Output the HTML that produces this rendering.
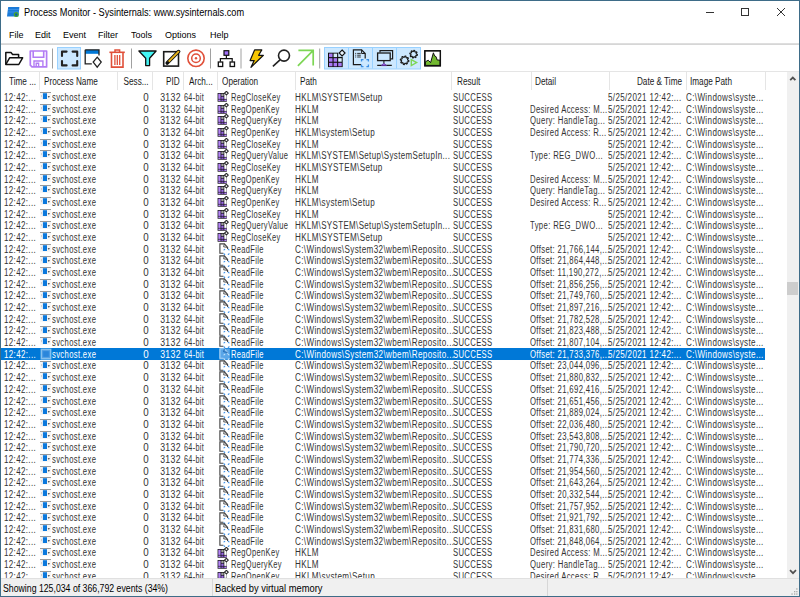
<!DOCTYPE html><html><head><meta charset="utf-8"><style>
*{margin:0;padding:0;box-sizing:border-box}
html,body{width:800px;height:597px;overflow:hidden;background:#fff}
body{position:relative;font-family:"Liberation Sans",sans-serif;color:#000}
.a{position:absolute}
.t{position:absolute;white-space:nowrap}
#rows .r{position:absolute;left:1px;width:764px;height:11.68px;font-size:10px;line-height:11.68px;color:#333}
#rows .r span{position:absolute;top:0.8px;white-space:nowrap;letter-spacing:0.45px;transform:scaleX(0.78);transform-origin:0 0}
#rows .r span.R{transform-origin:100% 0}
#rows .r.sel{background:#0078d7;color:#fff}
.hd{position:absolute;top:72px;height:18px;line-height:18px;font-size:10px;color:#222}
.hs{position:absolute;top:72px;width:1px;height:18px;background:#e5e5e5}
</style></head><body><div class="a" style="left:0;top:0;width:800px;height:597px;border:1px solid #3e6c88"></div>
<svg class="a" style="left:0;top:0" width="30" height="24">
<path d="M8.2 7 L19.4 7 L18.4 16.6 L7 16.6 Z" fill="#1a7ad8"/>
<path d="M8 9.5 L19.2 9.5 M7.8 12 L19 12" stroke="#4aa0f0" stroke-width="0.6"/>
<circle cx="16.2" cy="14.6" r="1.9" fill="#0a5fb0" stroke="#4aa828" stroke-width="1.2"/>
</svg>
<div class="t" style="left:23.50px;transform-origin:0 0;top:7.84px;font-size:10px;line-height:10px;transform:scaleX(0.9190);">Process Monitor - Sysinternals: www.sysinternals.com</div>
<div class="a" style="left:706px;top:12px;width:8px;height:1px;background:#333"></div>
<div class="a" style="left:741px;top:8px;width:8px;height:8px;border:1px solid #333"></div>
<svg class="a" style="left:775px;top:6px" width="12" height="12"><path d="M2 2 L10 10 M10 2 L2 10" stroke="#333" stroke-width="1"/></svg>
<div class="t" style="left:8.50px;transform-origin:0 0;top:30.34px;font-size:9.4px;line-height:9.4px;transform:scaleX(0.9600);">File</div>
<div class="t" style="left:35.00px;transform-origin:0 0;top:30.34px;font-size:9.4px;line-height:9.4px;transform:scaleX(0.9600);">Edit</div>
<div class="t" style="left:63.20px;transform-origin:0 0;top:30.34px;font-size:9.4px;line-height:9.4px;transform:scaleX(0.9600);">Event</div>
<div class="t" style="left:97.70px;transform-origin:0 0;top:30.34px;font-size:9.4px;line-height:9.4px;transform:scaleX(0.9600);">Filter</div>
<div class="t" style="left:131.10px;transform-origin:0 0;top:30.34px;font-size:9.4px;line-height:9.4px;transform:scaleX(0.9600);">Tools</div>
<div class="t" style="left:164.50px;transform-origin:0 0;top:30.34px;font-size:9.4px;line-height:9.4px;transform:scaleX(0.9600);">Options</div>
<div class="t" style="left:210.10px;transform-origin:0 0;top:30.34px;font-size:9.4px;line-height:9.4px;transform:scaleX(0.9600);">Help</div>
<div class="a" style="left:1px;top:43px;width:798px;height:1px;background:#dedede"></div>
<div class="a" style="left:1px;top:44px;width:798px;height:1px;background:#d6d6d6"></div>
<svg class="a" style="left:0;top:44px" width="800" height="27" viewBox="0 44 800 27">
<rect x="57.5" y="47.5" width="23" height="21.5" fill="#cce8ff" stroke="#99d1ff" stroke-width="1"/>
<rect x="324.5" y="47.5" width="96" height="21.5" fill="#cce8ff" stroke="#99d1ff" stroke-width="1"/>
<line x1="348.5" y1="48" x2="348.5" y2="68.5" stroke="#99d1ff" stroke-width="1"/>
<line x1="372.5" y1="48" x2="372.5" y2="68.5" stroke="#99d1ff" stroke-width="1"/>
<line x1="396.5" y1="48" x2="396.5" y2="68.5" stroke="#99d1ff" stroke-width="1"/>
<line x1="52.5" y1="48.5" x2="52.5" y2="68.5" stroke="#a0a0a0" stroke-width="1"/>
<line x1="131.5" y1="48.5" x2="131.5" y2="68.5" stroke="#a0a0a0" stroke-width="1"/>
<line x1="210.5" y1="48.5" x2="210.5" y2="68.5" stroke="#a0a0a0" stroke-width="1"/>
<line x1="241" y1="48.5" x2="241" y2="68.5" stroke="#a0a0a0" stroke-width="1"/>
<line x1="319.7" y1="48.5" x2="319.7" y2="68.5" stroke="#a0a0a0" stroke-width="1"/>
<path d="M5.8 64.5 L5.8 52.6 L11 52.6 L12.6 54.4 L18.6 54.4 L18.6 57.8" fill="none" stroke="#111" stroke-width="1.5" stroke-linejoin="round"/>
<path d="M5.8 64.5 L9.6 57.8 L22.6 57.8 L18.8 64.5 Z" fill="none" stroke="#111" stroke-width="1.5" stroke-linejoin="round"/>
<path d="M30.3 51 L46.6 51 L46.6 66.9 L32 66.9 L30.3 65.2 Z" fill="none" stroke="#b27cf4" stroke-width="1.7" stroke-linejoin="round"/>
<path d="M33.2 51 L33.2 57.3 L43.7 57.3 L43.7 51" fill="none" stroke="#b27cf4" stroke-width="1.6"/>
<path d="M34 66.9 L34 61 L42.9 61 L42.9 66.9 M36.2 66.9 L36.2 63.2 L38.6 63.2 L38.6 66.9" fill="none" stroke="#b27cf4" stroke-width="1.4"/>
<path d="M62 56 L62 51.6 L66.6 51.6 M72.6 51.6 L77.2 51.6 L77.2 56 M77.2 61 L77.2 65.4 L72.6 65.4 M66.6 65.4 L62 65.4 L62 61" fill="none" stroke="#222" stroke-width="2.1" stroke-linecap="round" stroke-linejoin="round"/>
<rect x="85.2" y="49.8" width="13.8" height="4" fill="#0078d7"/>
<path d="M85.2 49.8 L99 49.8 L99 55.6 M85.2 49.8 L85.2 63.8 L91.8 63.8" fill="none" stroke="#222" stroke-width="1.3"/>
<path d="M97.2 57.2 L101.2 62.1 L97.2 67.1 L93.2 62.1 Z" fill="none" stroke="#222" stroke-width="1.3"/>
<path d="M109.4 52.3 L124.8 52.3" stroke="#e0503a" stroke-width="1.6"/>
<path d="M115 52.3 L115 50 L119.6 50 L119.6 52.3" fill="none" stroke="#e0503a" stroke-width="1.5"/>
<path d="M111.5 52.3 L111.5 67.1 L123 67.1 L123 52.3" fill="none" stroke="#e0503a" stroke-width="1.6"/>
<path d="M114.9 55 L114.9 65 M117.3 55 L117.3 65 M119.7 55 L119.7 65" fill="none" stroke="#e0503a" stroke-width="1.3"/>
<path d="M138.9 51 L156.1 51 L149.6 58.2 L149.6 65.6 L145.7 65.6 L145.7 58.2 Z" fill="#44f4f4" stroke="#111" stroke-width="1.3" stroke-linejoin="round"/>
<rect x="163.7" y="51.7" width="14.8" height="14.4" fill="none" stroke="#1b1b1b" stroke-width="1.6"/>
<path d="M167.2 63 L178.6 51.6" stroke="#111" stroke-width="3.6" stroke-linecap="round"/>
<path d="M168.4 61.8 L178.5 51.7" stroke="#e8b41c" stroke-width="1.9" stroke-linecap="round"/>
<path d="M166.2 64.2 L167.8 60.8 L169.6 62.6 Z" fill="#111"/>
<circle cx="196" cy="58.3" r="8.2" fill="none" stroke="#e0503a" stroke-width="1.6"/>
<circle cx="196" cy="58.3" r="4.3" fill="none" stroke="#e0503a" stroke-width="1.5"/>
<circle cx="196" cy="58.3" r="1.2" fill="#e0503a"/>
<rect x="224" y="50.7" width="4.8" height="4.6" fill="#a070f8" stroke="#111" stroke-width="1.2"/>
<path d="M226.4 55.3 L226.4 58.6 M220.4 61.8 L220.4 58.6 L232.2 58.6 L232.2 61.8" fill="none" stroke="#111" stroke-width="1.2"/>
<rect x="218.3" y="62" width="4.4" height="4.5" fill="#fff" stroke="#111" stroke-width="1.3"/>
<rect x="230.1" y="62" width="4.4" height="4.5" fill="#fff" stroke="#111" stroke-width="1.3"/>
<path d="M254.6 49.9 L261.8 49.9 L258.6 55.3 L263.4 55.3 L251.0 67.3 L254.2 60.6 L250.1 60.6 Z" fill="#f7c600" stroke="#111" stroke-width="1.2" stroke-linejoin="round"/>
<circle cx="284" cy="55.6" r="5.5" fill="none" stroke="#222" stroke-width="1.6"/>
<path d="M280 59.8 L272.9 66.3" stroke="#222" stroke-width="1.6"/>
<path d="M297.9 65.9 L313 50.6 M298.4 50.4 L313.2 50.4 L313.2 65.6" fill="none" stroke="#7dd655" stroke-width="1.7"/>
<rect x="328" y="52.7" width="10.2" height="4.8" fill="#111"/>
<rect x="328" y="56.9" width="14.7" height="10.2" fill="#111"/>
<rect x="329.00" y="53.60" width="3.5" height="3.5" fill="#a878f4"/>
<rect x="333.60" y="53.60" width="3.5" height="3.5" fill="#d8eefa"/>
<rect x="329.00" y="58.20" width="3.5" height="3.5" fill="#a878f4"/>
<rect x="333.60" y="58.20" width="3.5" height="3.5" fill="#a878f4"/>
<rect x="338.20" y="58.20" width="3.5" height="3.5" fill="#d8eefa"/>
<rect x="329.00" y="62.80" width="3.5" height="3.5" fill="#a878f4"/>
<rect x="333.60" y="62.80" width="3.5" height="3.5" fill="#a878f4"/>
<rect x="338.20" y="62.80" width="3.5" height="3.5" fill="#a878f4"/>
<path d="M342.1 50 L345.1 53 L342.1 56 L339.1 53 Z" fill="#e8f4fc" stroke="#111" stroke-width="1.1"/>
<path d="M361 64.6 L353.4 64.6 L353.4 49.9 L361.6 49.9 L365.2 53.5 L365.2 58.5" fill="none" stroke="#1b1b1b" stroke-width="1.2"/>
<path d="M361.6 49.9 L361.6 53.5 L365.2 53.5" fill="none" stroke="#1b1b1b" stroke-width="1"/>
<path d="M355.2 53.4 h1 M357.2 53.4 h3.6 M355.2 55.2 h1 M357.2 55.2 h3.6 M355.2 57 h1 M357.2 57 h3.6" stroke="#333" stroke-width="1"/>
<path d="M361.5 61.6 L361.5 59.6 L363.5 59.6 M366.4 59.6 L368.4 59.6 L368.4 61.6 M368.4 64.6 L368.4 66.7 L366.4 66.7 M363.5 66.7 L361.5 66.7 L361.5 64.6" fill="none" stroke="#3c90e6" stroke-width="1.3"/>
<path d="M380 52.4 L380 50.7 L392.6 50.7 L392.6 58.8 L390.4 58.8" fill="none" stroke="#1b1b1b" stroke-width="1.2"/>
<rect x="377.6" y="53" width="12.6" height="7.6" fill="#cce8ff" stroke="#1b1b1b" stroke-width="1.3"/>
<path d="M383.9 60.6 L383.9 63.4 M377.2 65.4 L391.8 65.4" stroke="#1b1b1b" stroke-width="1.1"/>
<path d="M381.2 65.6 L383.9 63.2 L386.6 65.6 Z" fill="#9a5ee0" stroke="#5a2aa0" stroke-width="0.7"/>
<path d="M408.88,60.72 L408.71,61.55 L407.33,61.76 L407.00,62.27 L407.33,63.62 L406.63,64.09 L405.50,63.27 L404.90,63.39 L404.18,64.58 L403.35,64.41 L403.14,63.03 L402.63,62.70 L401.28,63.03 L400.81,62.33 L401.63,61.20 L401.51,60.60 L400.32,59.88 L400.49,59.05 L401.87,58.84 L402.20,58.33 L401.87,56.98 L402.57,56.51 L403.70,57.33 L404.30,57.21 L405.02,56.02 L405.85,56.19 L406.06,57.57 L406.57,57.90 L407.92,57.57 L408.39,58.27 L407.57,59.40 L407.69,60.00Z" fill="none" stroke="#1b1b1b" stroke-width="1.2" stroke-linejoin="round"/>
<path d="M417.38,54.57 L417.24,55.30 L415.98,55.47 L415.69,55.91 L416.01,57.14 L415.39,57.55 L414.38,56.78 L413.86,56.89 L413.23,57.98 L412.50,57.84 L412.33,56.58 L411.89,56.29 L410.66,56.61 L410.25,55.99 L411.02,54.98 L410.91,54.46 L409.82,53.83 L409.96,53.10 L411.22,52.93 L411.51,52.49 L411.19,51.26 L411.81,50.85 L412.82,51.62 L413.34,51.51 L413.97,50.42 L414.70,50.56 L414.87,51.82 L415.31,52.11 L416.54,51.79 L416.95,52.41 L416.18,53.42 L416.29,53.94Z" fill="none" stroke="#1b1b1b" stroke-width="1.2" stroke-linejoin="round"/>
<path d="M411.3 59.6 L416.6 62.6 L411.3 65.6 Z" fill="none" stroke="#7dd655" stroke-width="1.4"/>
<rect x="424.8" y="50.8" width="15.6" height="15" fill="#fff" stroke="#111" stroke-width="1.25"/>
<path d="M425.4 61.8 L428.2 60.2 L430.6 62.6 L433.4 52.8 L434.6 56 L436 56.6 L437.2 60 L440 60.2 L440 65.4 L425.4 65.4 Z" fill="#72b830" stroke="#111" stroke-width="1" stroke-linejoin="round"/>
<rect x="424.8" y="50.8" width="15.6" height="15" fill="none" stroke="#111" stroke-width="1.25"/>
</svg>
<div class="a" style="left:1px;top:71px;width:798px;height:1px;background:#e5e5e5"></div>
<div class="hs" style="left:38.5px"></div>
<div class="hs" style="left:116.5px"></div>
<div class="hs" style="left:152.0px"></div>
<div class="hs" style="left:182.5px"></div>
<div class="hs" style="left:217.1px"></div>
<div class="hs" style="left:295.0px"></div>
<div class="hs" style="left:451.2px"></div>
<div class="hs" style="left:530.7px"></div>
<div class="hs" style="left:608.5px"></div>
<div class="hs" style="left:685.8px"></div>
<div class="hs" style="left:764.5px"></div>
<div class="t" style="left:8.70px;transform-origin:0 0;top:76.73px;font-size:10px;line-height:10px;transform:scaleX(0.8200);color:#1a1a1a;">Time ...</div>
<div class="t" style="left:43.90px;transform-origin:0 0;top:76.73px;font-size:10px;line-height:10px;transform:scaleX(0.8200);color:#1a1a1a;">Process Name</div>
<div class="t" style="right:651.50px;transform-origin:100% 0;top:76.73px;font-size:10px;line-height:10px;transform:scaleX(0.8200);color:#1a1a1a;">Sess...</div>
<div class="t" style="right:620.00px;transform-origin:100% 0;top:76.73px;font-size:10px;line-height:10px;transform:scaleX(0.8200);color:#1a1a1a;">PID</div>
<div class="t" style="left:189.30px;transform-origin:0 0;top:76.73px;font-size:10px;line-height:10px;transform:scaleX(0.8200);color:#1a1a1a;">Arch...</div>
<div class="t" style="left:222.30px;transform-origin:0 0;top:76.73px;font-size:10px;line-height:10px;transform:scaleX(0.8200);color:#1a1a1a;">Operation</div>
<div class="t" style="left:300.10px;transform-origin:0 0;top:76.73px;font-size:10px;line-height:10px;transform:scaleX(0.8200);color:#1a1a1a;">Path</div>
<div class="t" style="left:456.90px;transform-origin:0 0;top:76.73px;font-size:10px;line-height:10px;transform:scaleX(0.8200);color:#1a1a1a;">Result</div>
<div class="t" style="left:535.00px;transform-origin:0 0;top:76.73px;font-size:10px;line-height:10px;transform:scaleX(0.8200);color:#1a1a1a;">Detail</div>
<div class="t" style="right:118.00px;transform-origin:100% 0;top:76.73px;font-size:10px;line-height:10px;transform:scaleX(0.8200);color:#1a1a1a;">Date &amp; Time</div>
<div class="t" style="left:690.30px;transform-origin:0 0;top:76.73px;font-size:10px;line-height:10px;transform:scaleX(0.8200);color:#1a1a1a;">Image Path</div>
<div id="rows">
<div class="r" style="top:91.04px"><span style="left:2.95px;transform:scaleX(0.7977)">12:42:...</span><svg class="a" style="left:38px;top:0" width="12" height="12"><rect x="1" y="1" width="11" height="1" fill="#9a9a9a"/><rect x="1" y="2" width="11" height="7" fill="#f6f6f6"/><rect x="2.2" y="4" width="0.8" height="2.2" fill="#c8c8c8"/><rect x="3.9" y="2.2" width="4.1" height="5.8" fill="#0a78dc"/><path d="M8.7 5 L10.9 5 L9.8 6.9 Z" fill="#555"/></svg><span style="left:51.20px;transform:scaleX(0.7661)">svchost.exe</span><span class="R" style="right:616.00px;transform:scaleX(0.9750)">0</span><span class="R" style="right:583.80px;transform:scaleX(0.8694)">3132</span><span style="left:183.30px;transform:scaleX(0.7261)">64-bit</span><svg class="a" style="left:216.4px;top:0" width="13" height="12"><rect x="0.6" y="2" width="9.2" height="8.7" fill="#111"/><rect x="1.3" y="2.7" width="2.3" height="5.2" fill="#b484f8"/><rect x="1.3" y="8.5" width="2.3" height="1.6" fill="#b484f8"/><rect x="4.3" y="2.7" width="2.3" height="2.3" fill="#a0a0a0"/><rect x="4.3" y="5.6" width="2.3" height="2.3" fill="#9a6ae4"/><rect x="4.3" y="8.5" width="2.3" height="1.6" fill="#7e50c0"/><rect x="7.3" y="2.7" width="2.3" height="5.2" fill="#fff"/><rect x="7.3" y="8.5" width="2.3" height="1.6" fill="#b484f8"/><path d="M9.4 0.3 L11.3 2.1 L9.4 3.9 L7.5 2.1 Z" fill="#fff" stroke="#2a2a2a" stroke-width="1.1" stroke-linejoin="round"/></svg><span style="left:229.70px;transform:scaleX(0.7514)">RegCloseKey</span><span style="left:294.20px;transform:scaleX(0.8099)">HKLM\SYSTEM\Setup</span><span style="left:451.80px;transform:scaleX(0.7678)">SUCCESS</span><span style="left:528.50px;transform:scaleX(0.7730)"></span><span style="left:607.30px;transform:scaleX(0.7995)">5/25/2021 12:42:...</span><span style="left:685.00px;transform:scaleX(0.8066)">C:\Windows\syste...</span></div>
<div class="r" style="top:102.72px"><span style="left:2.95px;transform:scaleX(0.7977)">12:42:...</span><svg class="a" style="left:38px;top:0" width="12" height="12"><rect x="1" y="1" width="11" height="1" fill="#9a9a9a"/><rect x="1" y="2" width="11" height="7" fill="#f6f6f6"/><rect x="2.2" y="4" width="0.8" height="2.2" fill="#c8c8c8"/><rect x="3.9" y="2.2" width="4.1" height="5.8" fill="#0a78dc"/><path d="M8.7 5 L10.9 5 L9.8 6.9 Z" fill="#555"/></svg><span style="left:51.20px;transform:scaleX(0.7661)">svchost.exe</span><span class="R" style="right:616.00px;transform:scaleX(0.9750)">0</span><span class="R" style="right:583.80px;transform:scaleX(0.8694)">3132</span><span style="left:183.30px;transform:scaleX(0.7261)">64-bit</span><svg class="a" style="left:216.4px;top:0" width="13" height="12"><rect x="0.6" y="2" width="9.2" height="8.7" fill="#111"/><rect x="1.3" y="2.7" width="2.3" height="5.2" fill="#b484f8"/><rect x="1.3" y="8.5" width="2.3" height="1.6" fill="#b484f8"/><rect x="4.3" y="2.7" width="2.3" height="2.3" fill="#a0a0a0"/><rect x="4.3" y="5.6" width="2.3" height="2.3" fill="#9a6ae4"/><rect x="4.3" y="8.5" width="2.3" height="1.6" fill="#7e50c0"/><rect x="7.3" y="2.7" width="2.3" height="5.2" fill="#fff"/><rect x="7.3" y="8.5" width="2.3" height="1.6" fill="#b484f8"/><path d="M9.4 0.3 L11.3 2.1 L9.4 3.9 L7.5 2.1 Z" fill="#fff" stroke="#2a2a2a" stroke-width="1.1" stroke-linejoin="round"/></svg><span style="left:229.70px;transform:scaleX(0.7514)">RegOpenKey</span><span style="left:294.20px;transform:scaleX(0.8099)">HKLM</span><span style="left:451.80px;transform:scaleX(0.7678)">SUCCESS</span><span style="left:528.50px;transform:scaleX(0.7730)">Desired Access: M...</span><span style="left:607.30px;transform:scaleX(0.7995)">5/25/2021 12:42:...</span><span style="left:685.00px;transform:scaleX(0.8066)">C:\Windows\syste...</span></div>
<div class="r" style="top:114.40px"><span style="left:2.95px;transform:scaleX(0.7977)">12:42:...</span><svg class="a" style="left:38px;top:0" width="12" height="12"><rect x="1" y="1" width="11" height="1" fill="#9a9a9a"/><rect x="1" y="2" width="11" height="7" fill="#f6f6f6"/><rect x="2.2" y="4" width="0.8" height="2.2" fill="#c8c8c8"/><rect x="3.9" y="2.2" width="4.1" height="5.8" fill="#0a78dc"/><path d="M8.7 5 L10.9 5 L9.8 6.9 Z" fill="#555"/></svg><span style="left:51.20px;transform:scaleX(0.7661)">svchost.exe</span><span class="R" style="right:616.00px;transform:scaleX(0.9750)">0</span><span class="R" style="right:583.80px;transform:scaleX(0.8694)">3132</span><span style="left:183.30px;transform:scaleX(0.7261)">64-bit</span><svg class="a" style="left:216.4px;top:0" width="13" height="12"><rect x="0.6" y="2" width="9.2" height="8.7" fill="#111"/><rect x="1.3" y="2.7" width="2.3" height="5.2" fill="#b484f8"/><rect x="1.3" y="8.5" width="2.3" height="1.6" fill="#b484f8"/><rect x="4.3" y="2.7" width="2.3" height="2.3" fill="#a0a0a0"/><rect x="4.3" y="5.6" width="2.3" height="2.3" fill="#9a6ae4"/><rect x="4.3" y="8.5" width="2.3" height="1.6" fill="#7e50c0"/><rect x="7.3" y="2.7" width="2.3" height="5.2" fill="#fff"/><rect x="7.3" y="8.5" width="2.3" height="1.6" fill="#b484f8"/><path d="M9.4 0.3 L11.3 2.1 L9.4 3.9 L7.5 2.1 Z" fill="#fff" stroke="#2a2a2a" stroke-width="1.1" stroke-linejoin="round"/></svg><span style="left:229.70px;transform:scaleX(0.7514)">RegQueryKey</span><span style="left:294.20px;transform:scaleX(0.8099)">HKLM</span><span style="left:451.80px;transform:scaleX(0.7678)">SUCCESS</span><span style="left:528.50px;transform:scaleX(0.7730)">Query: HandleTag...</span><span style="left:607.30px;transform:scaleX(0.7995)">5/25/2021 12:42:...</span><span style="left:685.00px;transform:scaleX(0.8066)">C:\Windows\syste...</span></div>
<div class="r" style="top:126.08px"><span style="left:2.95px;transform:scaleX(0.7977)">12:42:...</span><svg class="a" style="left:38px;top:0" width="12" height="12"><rect x="1" y="1" width="11" height="1" fill="#9a9a9a"/><rect x="1" y="2" width="11" height="7" fill="#f6f6f6"/><rect x="2.2" y="4" width="0.8" height="2.2" fill="#c8c8c8"/><rect x="3.9" y="2.2" width="4.1" height="5.8" fill="#0a78dc"/><path d="M8.7 5 L10.9 5 L9.8 6.9 Z" fill="#555"/></svg><span style="left:51.20px;transform:scaleX(0.7661)">svchost.exe</span><span class="R" style="right:616.00px;transform:scaleX(0.9750)">0</span><span class="R" style="right:583.80px;transform:scaleX(0.8694)">3132</span><span style="left:183.30px;transform:scaleX(0.7261)">64-bit</span><svg class="a" style="left:216.4px;top:0" width="13" height="12"><rect x="0.6" y="2" width="9.2" height="8.7" fill="#111"/><rect x="1.3" y="2.7" width="2.3" height="5.2" fill="#b484f8"/><rect x="1.3" y="8.5" width="2.3" height="1.6" fill="#b484f8"/><rect x="4.3" y="2.7" width="2.3" height="2.3" fill="#a0a0a0"/><rect x="4.3" y="5.6" width="2.3" height="2.3" fill="#9a6ae4"/><rect x="4.3" y="8.5" width="2.3" height="1.6" fill="#7e50c0"/><rect x="7.3" y="2.7" width="2.3" height="5.2" fill="#fff"/><rect x="7.3" y="8.5" width="2.3" height="1.6" fill="#b484f8"/><path d="M9.4 0.3 L11.3 2.1 L9.4 3.9 L7.5 2.1 Z" fill="#fff" stroke="#2a2a2a" stroke-width="1.1" stroke-linejoin="round"/></svg><span style="left:229.70px;transform:scaleX(0.7514)">RegOpenKey</span><span style="left:294.20px;transform:scaleX(0.8099)">HKLM\system\Setup</span><span style="left:451.80px;transform:scaleX(0.7678)">SUCCESS</span><span style="left:528.50px;transform:scaleX(0.7730)">Desired Access: R...</span><span style="left:607.30px;transform:scaleX(0.7995)">5/25/2021 12:42:...</span><span style="left:685.00px;transform:scaleX(0.8066)">C:\Windows\syste...</span></div>
<div class="r" style="top:137.76px"><span style="left:2.95px;transform:scaleX(0.7977)">12:42:...</span><svg class="a" style="left:38px;top:0" width="12" height="12"><rect x="1" y="1" width="11" height="1" fill="#9a9a9a"/><rect x="1" y="2" width="11" height="7" fill="#f6f6f6"/><rect x="2.2" y="4" width="0.8" height="2.2" fill="#c8c8c8"/><rect x="3.9" y="2.2" width="4.1" height="5.8" fill="#0a78dc"/><path d="M8.7 5 L10.9 5 L9.8 6.9 Z" fill="#555"/></svg><span style="left:51.20px;transform:scaleX(0.7661)">svchost.exe</span><span class="R" style="right:616.00px;transform:scaleX(0.9750)">0</span><span class="R" style="right:583.80px;transform:scaleX(0.8694)">3132</span><span style="left:183.30px;transform:scaleX(0.7261)">64-bit</span><svg class="a" style="left:216.4px;top:0" width="13" height="12"><rect x="0.6" y="2" width="9.2" height="8.7" fill="#111"/><rect x="1.3" y="2.7" width="2.3" height="5.2" fill="#b484f8"/><rect x="1.3" y="8.5" width="2.3" height="1.6" fill="#b484f8"/><rect x="4.3" y="2.7" width="2.3" height="2.3" fill="#a0a0a0"/><rect x="4.3" y="5.6" width="2.3" height="2.3" fill="#9a6ae4"/><rect x="4.3" y="8.5" width="2.3" height="1.6" fill="#7e50c0"/><rect x="7.3" y="2.7" width="2.3" height="5.2" fill="#fff"/><rect x="7.3" y="8.5" width="2.3" height="1.6" fill="#b484f8"/><path d="M9.4 0.3 L11.3 2.1 L9.4 3.9 L7.5 2.1 Z" fill="#fff" stroke="#2a2a2a" stroke-width="1.1" stroke-linejoin="round"/></svg><span style="left:229.70px;transform:scaleX(0.7514)">RegCloseKey</span><span style="left:294.20px;transform:scaleX(0.8099)">HKLM</span><span style="left:451.80px;transform:scaleX(0.7678)">SUCCESS</span><span style="left:528.50px;transform:scaleX(0.7730)"></span><span style="left:607.30px;transform:scaleX(0.7995)">5/25/2021 12:42:...</span><span style="left:685.00px;transform:scaleX(0.8066)">C:\Windows\syste...</span></div>
<div class="r" style="top:149.44px"><span style="left:2.95px;transform:scaleX(0.7977)">12:42:...</span><svg class="a" style="left:38px;top:0" width="12" height="12"><rect x="1" y="1" width="11" height="1" fill="#9a9a9a"/><rect x="1" y="2" width="11" height="7" fill="#f6f6f6"/><rect x="2.2" y="4" width="0.8" height="2.2" fill="#c8c8c8"/><rect x="3.9" y="2.2" width="4.1" height="5.8" fill="#0a78dc"/><path d="M8.7 5 L10.9 5 L9.8 6.9 Z" fill="#555"/></svg><span style="left:51.20px;transform:scaleX(0.7661)">svchost.exe</span><span class="R" style="right:616.00px;transform:scaleX(0.9750)">0</span><span class="R" style="right:583.80px;transform:scaleX(0.8694)">3132</span><span style="left:183.30px;transform:scaleX(0.7261)">64-bit</span><svg class="a" style="left:216.4px;top:0" width="13" height="12"><rect x="0.6" y="2" width="9.2" height="8.7" fill="#111"/><rect x="1.3" y="2.7" width="2.3" height="5.2" fill="#b484f8"/><rect x="1.3" y="8.5" width="2.3" height="1.6" fill="#b484f8"/><rect x="4.3" y="2.7" width="2.3" height="2.3" fill="#a0a0a0"/><rect x="4.3" y="5.6" width="2.3" height="2.3" fill="#9a6ae4"/><rect x="4.3" y="8.5" width="2.3" height="1.6" fill="#7e50c0"/><rect x="7.3" y="2.7" width="2.3" height="5.2" fill="#fff"/><rect x="7.3" y="8.5" width="2.3" height="1.6" fill="#b484f8"/><path d="M9.4 0.3 L11.3 2.1 L9.4 3.9 L7.5 2.1 Z" fill="#fff" stroke="#2a2a2a" stroke-width="1.1" stroke-linejoin="round"/></svg><span style="left:229.70px;transform:scaleX(0.7514)">RegQueryValue</span><span style="left:294.20px;transform:scaleX(0.7969)">HKLM\SYSTEM\Setup\SystemSetupIn...</span><span style="left:451.80px;transform:scaleX(0.7678)">SUCCESS</span><span style="left:528.50px;transform:scaleX(0.7730)">Type: REG_DWO...</span><span style="left:607.30px;transform:scaleX(0.7995)">5/25/2021 12:42:...</span><span style="left:685.00px;transform:scaleX(0.8066)">C:\Windows\syste...</span></div>
<div class="r" style="top:161.12px"><span style="left:2.95px;transform:scaleX(0.7977)">12:42:...</span><svg class="a" style="left:38px;top:0" width="12" height="12"><rect x="1" y="1" width="11" height="1" fill="#9a9a9a"/><rect x="1" y="2" width="11" height="7" fill="#f6f6f6"/><rect x="2.2" y="4" width="0.8" height="2.2" fill="#c8c8c8"/><rect x="3.9" y="2.2" width="4.1" height="5.8" fill="#0a78dc"/><path d="M8.7 5 L10.9 5 L9.8 6.9 Z" fill="#555"/></svg><span style="left:51.20px;transform:scaleX(0.7661)">svchost.exe</span><span class="R" style="right:616.00px;transform:scaleX(0.9750)">0</span><span class="R" style="right:583.80px;transform:scaleX(0.8694)">3132</span><span style="left:183.30px;transform:scaleX(0.7261)">64-bit</span><svg class="a" style="left:216.4px;top:0" width="13" height="12"><rect x="0.6" y="2" width="9.2" height="8.7" fill="#111"/><rect x="1.3" y="2.7" width="2.3" height="5.2" fill="#b484f8"/><rect x="1.3" y="8.5" width="2.3" height="1.6" fill="#b484f8"/><rect x="4.3" y="2.7" width="2.3" height="2.3" fill="#a0a0a0"/><rect x="4.3" y="5.6" width="2.3" height="2.3" fill="#9a6ae4"/><rect x="4.3" y="8.5" width="2.3" height="1.6" fill="#7e50c0"/><rect x="7.3" y="2.7" width="2.3" height="5.2" fill="#fff"/><rect x="7.3" y="8.5" width="2.3" height="1.6" fill="#b484f8"/><path d="M9.4 0.3 L11.3 2.1 L9.4 3.9 L7.5 2.1 Z" fill="#fff" stroke="#2a2a2a" stroke-width="1.1" stroke-linejoin="round"/></svg><span style="left:229.70px;transform:scaleX(0.7514)">RegCloseKey</span><span style="left:294.20px;transform:scaleX(0.8099)">HKLM\SYSTEM\Setup</span><span style="left:451.80px;transform:scaleX(0.7678)">SUCCESS</span><span style="left:528.50px;transform:scaleX(0.7730)"></span><span style="left:607.30px;transform:scaleX(0.7995)">5/25/2021 12:42:...</span><span style="left:685.00px;transform:scaleX(0.8066)">C:\Windows\syste...</span></div>
<div class="r" style="top:172.80px"><span style="left:2.95px;transform:scaleX(0.7977)">12:42:...</span><svg class="a" style="left:38px;top:0" width="12" height="12"><rect x="1" y="1" width="11" height="1" fill="#9a9a9a"/><rect x="1" y="2" width="11" height="7" fill="#f6f6f6"/><rect x="2.2" y="4" width="0.8" height="2.2" fill="#c8c8c8"/><rect x="3.9" y="2.2" width="4.1" height="5.8" fill="#0a78dc"/><path d="M8.7 5 L10.9 5 L9.8 6.9 Z" fill="#555"/></svg><span style="left:51.20px;transform:scaleX(0.7661)">svchost.exe</span><span class="R" style="right:616.00px;transform:scaleX(0.9750)">0</span><span class="R" style="right:583.80px;transform:scaleX(0.8694)">3132</span><span style="left:183.30px;transform:scaleX(0.7261)">64-bit</span><svg class="a" style="left:216.4px;top:0" width="13" height="12"><rect x="0.6" y="2" width="9.2" height="8.7" fill="#111"/><rect x="1.3" y="2.7" width="2.3" height="5.2" fill="#b484f8"/><rect x="1.3" y="8.5" width="2.3" height="1.6" fill="#b484f8"/><rect x="4.3" y="2.7" width="2.3" height="2.3" fill="#a0a0a0"/><rect x="4.3" y="5.6" width="2.3" height="2.3" fill="#9a6ae4"/><rect x="4.3" y="8.5" width="2.3" height="1.6" fill="#7e50c0"/><rect x="7.3" y="2.7" width="2.3" height="5.2" fill="#fff"/><rect x="7.3" y="8.5" width="2.3" height="1.6" fill="#b484f8"/><path d="M9.4 0.3 L11.3 2.1 L9.4 3.9 L7.5 2.1 Z" fill="#fff" stroke="#2a2a2a" stroke-width="1.1" stroke-linejoin="round"/></svg><span style="left:229.70px;transform:scaleX(0.7514)">RegOpenKey</span><span style="left:294.20px;transform:scaleX(0.8099)">HKLM</span><span style="left:451.80px;transform:scaleX(0.7678)">SUCCESS</span><span style="left:528.50px;transform:scaleX(0.7730)">Desired Access: M...</span><span style="left:607.30px;transform:scaleX(0.7995)">5/25/2021 12:42:...</span><span style="left:685.00px;transform:scaleX(0.8066)">C:\Windows\syste...</span></div>
<div class="r" style="top:184.48px"><span style="left:2.95px;transform:scaleX(0.7977)">12:42:...</span><svg class="a" style="left:38px;top:0" width="12" height="12"><rect x="1" y="1" width="11" height="1" fill="#9a9a9a"/><rect x="1" y="2" width="11" height="7" fill="#f6f6f6"/><rect x="2.2" y="4" width="0.8" height="2.2" fill="#c8c8c8"/><rect x="3.9" y="2.2" width="4.1" height="5.8" fill="#0a78dc"/><path d="M8.7 5 L10.9 5 L9.8 6.9 Z" fill="#555"/></svg><span style="left:51.20px;transform:scaleX(0.7661)">svchost.exe</span><span class="R" style="right:616.00px;transform:scaleX(0.9750)">0</span><span class="R" style="right:583.80px;transform:scaleX(0.8694)">3132</span><span style="left:183.30px;transform:scaleX(0.7261)">64-bit</span><svg class="a" style="left:216.4px;top:0" width="13" height="12"><rect x="0.6" y="2" width="9.2" height="8.7" fill="#111"/><rect x="1.3" y="2.7" width="2.3" height="5.2" fill="#b484f8"/><rect x="1.3" y="8.5" width="2.3" height="1.6" fill="#b484f8"/><rect x="4.3" y="2.7" width="2.3" height="2.3" fill="#a0a0a0"/><rect x="4.3" y="5.6" width="2.3" height="2.3" fill="#9a6ae4"/><rect x="4.3" y="8.5" width="2.3" height="1.6" fill="#7e50c0"/><rect x="7.3" y="2.7" width="2.3" height="5.2" fill="#fff"/><rect x="7.3" y="8.5" width="2.3" height="1.6" fill="#b484f8"/><path d="M9.4 0.3 L11.3 2.1 L9.4 3.9 L7.5 2.1 Z" fill="#fff" stroke="#2a2a2a" stroke-width="1.1" stroke-linejoin="round"/></svg><span style="left:229.70px;transform:scaleX(0.7514)">RegQueryKey</span><span style="left:294.20px;transform:scaleX(0.8099)">HKLM</span><span style="left:451.80px;transform:scaleX(0.7678)">SUCCESS</span><span style="left:528.50px;transform:scaleX(0.7730)">Query: HandleTag...</span><span style="left:607.30px;transform:scaleX(0.7995)">5/25/2021 12:42:...</span><span style="left:685.00px;transform:scaleX(0.8066)">C:\Windows\syste...</span></div>
<div class="r" style="top:196.16px"><span style="left:2.95px;transform:scaleX(0.7977)">12:42:...</span><svg class="a" style="left:38px;top:0" width="12" height="12"><rect x="1" y="1" width="11" height="1" fill="#9a9a9a"/><rect x="1" y="2" width="11" height="7" fill="#f6f6f6"/><rect x="2.2" y="4" width="0.8" height="2.2" fill="#c8c8c8"/><rect x="3.9" y="2.2" width="4.1" height="5.8" fill="#0a78dc"/><path d="M8.7 5 L10.9 5 L9.8 6.9 Z" fill="#555"/></svg><span style="left:51.20px;transform:scaleX(0.7661)">svchost.exe</span><span class="R" style="right:616.00px;transform:scaleX(0.9750)">0</span><span class="R" style="right:583.80px;transform:scaleX(0.8694)">3132</span><span style="left:183.30px;transform:scaleX(0.7261)">64-bit</span><svg class="a" style="left:216.4px;top:0" width="13" height="12"><rect x="0.6" y="2" width="9.2" height="8.7" fill="#111"/><rect x="1.3" y="2.7" width="2.3" height="5.2" fill="#b484f8"/><rect x="1.3" y="8.5" width="2.3" height="1.6" fill="#b484f8"/><rect x="4.3" y="2.7" width="2.3" height="2.3" fill="#a0a0a0"/><rect x="4.3" y="5.6" width="2.3" height="2.3" fill="#9a6ae4"/><rect x="4.3" y="8.5" width="2.3" height="1.6" fill="#7e50c0"/><rect x="7.3" y="2.7" width="2.3" height="5.2" fill="#fff"/><rect x="7.3" y="8.5" width="2.3" height="1.6" fill="#b484f8"/><path d="M9.4 0.3 L11.3 2.1 L9.4 3.9 L7.5 2.1 Z" fill="#fff" stroke="#2a2a2a" stroke-width="1.1" stroke-linejoin="round"/></svg><span style="left:229.70px;transform:scaleX(0.7514)">RegOpenKey</span><span style="left:294.20px;transform:scaleX(0.8099)">HKLM\system\Setup</span><span style="left:451.80px;transform:scaleX(0.7678)">SUCCESS</span><span style="left:528.50px;transform:scaleX(0.7730)">Desired Access: R...</span><span style="left:607.30px;transform:scaleX(0.7995)">5/25/2021 12:42:...</span><span style="left:685.00px;transform:scaleX(0.8066)">C:\Windows\syste...</span></div>
<div class="r" style="top:207.84px"><span style="left:2.95px;transform:scaleX(0.7977)">12:42:...</span><svg class="a" style="left:38px;top:0" width="12" height="12"><rect x="1" y="1" width="11" height="1" fill="#9a9a9a"/><rect x="1" y="2" width="11" height="7" fill="#f6f6f6"/><rect x="2.2" y="4" width="0.8" height="2.2" fill="#c8c8c8"/><rect x="3.9" y="2.2" width="4.1" height="5.8" fill="#0a78dc"/><path d="M8.7 5 L10.9 5 L9.8 6.9 Z" fill="#555"/></svg><span style="left:51.20px;transform:scaleX(0.7661)">svchost.exe</span><span class="R" style="right:616.00px;transform:scaleX(0.9750)">0</span><span class="R" style="right:583.80px;transform:scaleX(0.8694)">3132</span><span style="left:183.30px;transform:scaleX(0.7261)">64-bit</span><svg class="a" style="left:216.4px;top:0" width="13" height="12"><rect x="0.6" y="2" width="9.2" height="8.7" fill="#111"/><rect x="1.3" y="2.7" width="2.3" height="5.2" fill="#b484f8"/><rect x="1.3" y="8.5" width="2.3" height="1.6" fill="#b484f8"/><rect x="4.3" y="2.7" width="2.3" height="2.3" fill="#a0a0a0"/><rect x="4.3" y="5.6" width="2.3" height="2.3" fill="#9a6ae4"/><rect x="4.3" y="8.5" width="2.3" height="1.6" fill="#7e50c0"/><rect x="7.3" y="2.7" width="2.3" height="5.2" fill="#fff"/><rect x="7.3" y="8.5" width="2.3" height="1.6" fill="#b484f8"/><path d="M9.4 0.3 L11.3 2.1 L9.4 3.9 L7.5 2.1 Z" fill="#fff" stroke="#2a2a2a" stroke-width="1.1" stroke-linejoin="round"/></svg><span style="left:229.70px;transform:scaleX(0.7514)">RegCloseKey</span><span style="left:294.20px;transform:scaleX(0.8099)">HKLM</span><span style="left:451.80px;transform:scaleX(0.7678)">SUCCESS</span><span style="left:528.50px;transform:scaleX(0.7730)"></span><span style="left:607.30px;transform:scaleX(0.7995)">5/25/2021 12:42:...</span><span style="left:685.00px;transform:scaleX(0.8066)">C:\Windows\syste...</span></div>
<div class="r" style="top:219.52px"><span style="left:2.95px;transform:scaleX(0.7977)">12:42:...</span><svg class="a" style="left:38px;top:0" width="12" height="12"><rect x="1" y="1" width="11" height="1" fill="#9a9a9a"/><rect x="1" y="2" width="11" height="7" fill="#f6f6f6"/><rect x="2.2" y="4" width="0.8" height="2.2" fill="#c8c8c8"/><rect x="3.9" y="2.2" width="4.1" height="5.8" fill="#0a78dc"/><path d="M8.7 5 L10.9 5 L9.8 6.9 Z" fill="#555"/></svg><span style="left:51.20px;transform:scaleX(0.7661)">svchost.exe</span><span class="R" style="right:616.00px;transform:scaleX(0.9750)">0</span><span class="R" style="right:583.80px;transform:scaleX(0.8694)">3132</span><span style="left:183.30px;transform:scaleX(0.7261)">64-bit</span><svg class="a" style="left:216.4px;top:0" width="13" height="12"><rect x="0.6" y="2" width="9.2" height="8.7" fill="#111"/><rect x="1.3" y="2.7" width="2.3" height="5.2" fill="#b484f8"/><rect x="1.3" y="8.5" width="2.3" height="1.6" fill="#b484f8"/><rect x="4.3" y="2.7" width="2.3" height="2.3" fill="#a0a0a0"/><rect x="4.3" y="5.6" width="2.3" height="2.3" fill="#9a6ae4"/><rect x="4.3" y="8.5" width="2.3" height="1.6" fill="#7e50c0"/><rect x="7.3" y="2.7" width="2.3" height="5.2" fill="#fff"/><rect x="7.3" y="8.5" width="2.3" height="1.6" fill="#b484f8"/><path d="M9.4 0.3 L11.3 2.1 L9.4 3.9 L7.5 2.1 Z" fill="#fff" stroke="#2a2a2a" stroke-width="1.1" stroke-linejoin="round"/></svg><span style="left:229.70px;transform:scaleX(0.7514)">RegQueryValue</span><span style="left:294.20px;transform:scaleX(0.7969)">HKLM\SYSTEM\Setup\SystemSetupIn...</span><span style="left:451.80px;transform:scaleX(0.7678)">SUCCESS</span><span style="left:528.50px;transform:scaleX(0.7730)">Type: REG_DWO...</span><span style="left:607.30px;transform:scaleX(0.7995)">5/25/2021 12:42:...</span><span style="left:685.00px;transform:scaleX(0.8066)">C:\Windows\syste...</span></div>
<div class="r" style="top:231.20px"><span style="left:2.95px;transform:scaleX(0.7977)">12:42:...</span><svg class="a" style="left:38px;top:0" width="12" height="12"><rect x="1" y="1" width="11" height="1" fill="#9a9a9a"/><rect x="1" y="2" width="11" height="7" fill="#f6f6f6"/><rect x="2.2" y="4" width="0.8" height="2.2" fill="#c8c8c8"/><rect x="3.9" y="2.2" width="4.1" height="5.8" fill="#0a78dc"/><path d="M8.7 5 L10.9 5 L9.8 6.9 Z" fill="#555"/></svg><span style="left:51.20px;transform:scaleX(0.7661)">svchost.exe</span><span class="R" style="right:616.00px;transform:scaleX(0.9750)">0</span><span class="R" style="right:583.80px;transform:scaleX(0.8694)">3132</span><span style="left:183.30px;transform:scaleX(0.7261)">64-bit</span><svg class="a" style="left:216.4px;top:0" width="13" height="12"><rect x="0.6" y="2" width="9.2" height="8.7" fill="#111"/><rect x="1.3" y="2.7" width="2.3" height="5.2" fill="#b484f8"/><rect x="1.3" y="8.5" width="2.3" height="1.6" fill="#b484f8"/><rect x="4.3" y="2.7" width="2.3" height="2.3" fill="#a0a0a0"/><rect x="4.3" y="5.6" width="2.3" height="2.3" fill="#9a6ae4"/><rect x="4.3" y="8.5" width="2.3" height="1.6" fill="#7e50c0"/><rect x="7.3" y="2.7" width="2.3" height="5.2" fill="#fff"/><rect x="7.3" y="8.5" width="2.3" height="1.6" fill="#b484f8"/><path d="M9.4 0.3 L11.3 2.1 L9.4 3.9 L7.5 2.1 Z" fill="#fff" stroke="#2a2a2a" stroke-width="1.1" stroke-linejoin="round"/></svg><span style="left:229.70px;transform:scaleX(0.7514)">RegCloseKey</span><span style="left:294.20px;transform:scaleX(0.8099)">HKLM\SYSTEM\Setup</span><span style="left:451.80px;transform:scaleX(0.7678)">SUCCESS</span><span style="left:528.50px;transform:scaleX(0.7730)"></span><span style="left:607.30px;transform:scaleX(0.7995)">5/25/2021 12:42:...</span><span style="left:685.00px;transform:scaleX(0.8066)">C:\Windows\syste...</span></div>
<div class="r" style="top:242.88px"><span style="left:2.95px;transform:scaleX(0.7977)">12:42:...</span><svg class="a" style="left:38px;top:0" width="12" height="12"><rect x="1" y="1" width="11" height="1" fill="#9a9a9a"/><rect x="1" y="2" width="11" height="7" fill="#f6f6f6"/><rect x="2.2" y="4" width="0.8" height="2.2" fill="#c8c8c8"/><rect x="3.9" y="2.2" width="4.1" height="5.8" fill="#0a78dc"/><path d="M8.7 5 L10.9 5 L9.8 6.9 Z" fill="#555"/></svg><span style="left:51.20px;transform:scaleX(0.7661)">svchost.exe</span><span class="R" style="right:616.00px;transform:scaleX(0.9750)">0</span><span class="R" style="right:583.80px;transform:scaleX(0.8694)">3132</span><span style="left:183.30px;transform:scaleX(0.7261)">64-bit</span><svg class="a" style="left:217px;top:0" width="13" height="12"><path d="M5.4 10.2 L1.9 10.2 L1.9 0.8 L6.4 0.8 L9.6 4.4 L9.6 6" fill="none" stroke="#444" stroke-width="1.15"/><path d="M6.4 0.8 L5.6 3.8 L9.6 4.4" fill="none" stroke="#444" stroke-width="0.9"/><path d="M6 7.4 v-1 h1.2 M9.8 6.4 h1.2 v1 M11 10.2 v1.2 h-1.2 M7.2 11.4 h-1.2 v-1.2" fill="none" stroke="#3c90e6" stroke-width="1"/></svg><span style="left:229.70px;transform:scaleX(0.7514)">ReadFile</span><span style="left:294.20px;transform:scaleX(0.8099)">C:\Windows\System32\wbem\Reposito...</span><span style="left:451.80px;transform:scaleX(0.7678)">SUCCESS</span><span style="left:528.50px;transform:scaleX(0.7730)">Offset: 21,766,144,...</span><span style="left:607.30px;transform:scaleX(0.7995)">5/25/2021 12:42:...</span><span style="left:685.00px;transform:scaleX(0.8066)">C:\Windows\syste...</span></div>
<div class="r" style="top:254.56px"><span style="left:2.95px;transform:scaleX(0.7977)">12:42:...</span><svg class="a" style="left:38px;top:0" width="12" height="12"><rect x="1" y="1" width="11" height="1" fill="#9a9a9a"/><rect x="1" y="2" width="11" height="7" fill="#f6f6f6"/><rect x="2.2" y="4" width="0.8" height="2.2" fill="#c8c8c8"/><rect x="3.9" y="2.2" width="4.1" height="5.8" fill="#0a78dc"/><path d="M8.7 5 L10.9 5 L9.8 6.9 Z" fill="#555"/></svg><span style="left:51.20px;transform:scaleX(0.7661)">svchost.exe</span><span class="R" style="right:616.00px;transform:scaleX(0.9750)">0</span><span class="R" style="right:583.80px;transform:scaleX(0.8694)">3132</span><span style="left:183.30px;transform:scaleX(0.7261)">64-bit</span><svg class="a" style="left:217px;top:0" width="13" height="12"><path d="M5.4 10.2 L1.9 10.2 L1.9 0.8 L6.4 0.8 L9.6 4.4 L9.6 6" fill="none" stroke="#444" stroke-width="1.15"/><path d="M6.4 0.8 L5.6 3.8 L9.6 4.4" fill="none" stroke="#444" stroke-width="0.9"/><path d="M6 7.4 v-1 h1.2 M9.8 6.4 h1.2 v1 M11 10.2 v1.2 h-1.2 M7.2 11.4 h-1.2 v-1.2" fill="none" stroke="#3c90e6" stroke-width="1"/></svg><span style="left:229.70px;transform:scaleX(0.7514)">ReadFile</span><span style="left:294.20px;transform:scaleX(0.8099)">C:\Windows\System32\wbem\Reposito...</span><span style="left:451.80px;transform:scaleX(0.7678)">SUCCESS</span><span style="left:528.50px;transform:scaleX(0.7730)">Offset: 21,864,448,...</span><span style="left:607.30px;transform:scaleX(0.7995)">5/25/2021 12:42:...</span><span style="left:685.00px;transform:scaleX(0.8066)">C:\Windows\syste...</span></div>
<div class="r" style="top:266.24px"><span style="left:2.95px;transform:scaleX(0.7977)">12:42:...</span><svg class="a" style="left:38px;top:0" width="12" height="12"><rect x="1" y="1" width="11" height="1" fill="#9a9a9a"/><rect x="1" y="2" width="11" height="7" fill="#f6f6f6"/><rect x="2.2" y="4" width="0.8" height="2.2" fill="#c8c8c8"/><rect x="3.9" y="2.2" width="4.1" height="5.8" fill="#0a78dc"/><path d="M8.7 5 L10.9 5 L9.8 6.9 Z" fill="#555"/></svg><span style="left:51.20px;transform:scaleX(0.7661)">svchost.exe</span><span class="R" style="right:616.00px;transform:scaleX(0.9750)">0</span><span class="R" style="right:583.80px;transform:scaleX(0.8694)">3132</span><span style="left:183.30px;transform:scaleX(0.7261)">64-bit</span><svg class="a" style="left:217px;top:0" width="13" height="12"><path d="M5.4 10.2 L1.9 10.2 L1.9 0.8 L6.4 0.8 L9.6 4.4 L9.6 6" fill="none" stroke="#444" stroke-width="1.15"/><path d="M6.4 0.8 L5.6 3.8 L9.6 4.4" fill="none" stroke="#444" stroke-width="0.9"/><path d="M6 7.4 v-1 h1.2 M9.8 6.4 h1.2 v1 M11 10.2 v1.2 h-1.2 M7.2 11.4 h-1.2 v-1.2" fill="none" stroke="#3c90e6" stroke-width="1"/></svg><span style="left:229.70px;transform:scaleX(0.7514)">ReadFile</span><span style="left:294.20px;transform:scaleX(0.8099)">C:\Windows\System32\wbem\Reposito...</span><span style="left:451.80px;transform:scaleX(0.7678)">SUCCESS</span><span style="left:528.50px;transform:scaleX(0.7730)">Offset: 11,190,272,...</span><span style="left:607.30px;transform:scaleX(0.7995)">5/25/2021 12:42:...</span><span style="left:685.00px;transform:scaleX(0.8066)">C:\Windows\syste...</span></div>
<div class="r" style="top:277.92px"><span style="left:2.95px;transform:scaleX(0.7977)">12:42:...</span><svg class="a" style="left:38px;top:0" width="12" height="12"><rect x="1" y="1" width="11" height="1" fill="#9a9a9a"/><rect x="1" y="2" width="11" height="7" fill="#f6f6f6"/><rect x="2.2" y="4" width="0.8" height="2.2" fill="#c8c8c8"/><rect x="3.9" y="2.2" width="4.1" height="5.8" fill="#0a78dc"/><path d="M8.7 5 L10.9 5 L9.8 6.9 Z" fill="#555"/></svg><span style="left:51.20px;transform:scaleX(0.7661)">svchost.exe</span><span class="R" style="right:616.00px;transform:scaleX(0.9750)">0</span><span class="R" style="right:583.80px;transform:scaleX(0.8694)">3132</span><span style="left:183.30px;transform:scaleX(0.7261)">64-bit</span><svg class="a" style="left:217px;top:0" width="13" height="12"><path d="M5.4 10.2 L1.9 10.2 L1.9 0.8 L6.4 0.8 L9.6 4.4 L9.6 6" fill="none" stroke="#444" stroke-width="1.15"/><path d="M6.4 0.8 L5.6 3.8 L9.6 4.4" fill="none" stroke="#444" stroke-width="0.9"/><path d="M6 7.4 v-1 h1.2 M9.8 6.4 h1.2 v1 M11 10.2 v1.2 h-1.2 M7.2 11.4 h-1.2 v-1.2" fill="none" stroke="#3c90e6" stroke-width="1"/></svg><span style="left:229.70px;transform:scaleX(0.7514)">ReadFile</span><span style="left:294.20px;transform:scaleX(0.8099)">C:\Windows\System32\wbem\Reposito...</span><span style="left:451.80px;transform:scaleX(0.7678)">SUCCESS</span><span style="left:528.50px;transform:scaleX(0.7730)">Offset: 21,856,256,...</span><span style="left:607.30px;transform:scaleX(0.7995)">5/25/2021 12:42:...</span><span style="left:685.00px;transform:scaleX(0.8066)">C:\Windows\syste...</span></div>
<div class="r" style="top:289.60px"><span style="left:2.95px;transform:scaleX(0.7977)">12:42:...</span><svg class="a" style="left:38px;top:0" width="12" height="12"><rect x="1" y="1" width="11" height="1" fill="#9a9a9a"/><rect x="1" y="2" width="11" height="7" fill="#f6f6f6"/><rect x="2.2" y="4" width="0.8" height="2.2" fill="#c8c8c8"/><rect x="3.9" y="2.2" width="4.1" height="5.8" fill="#0a78dc"/><path d="M8.7 5 L10.9 5 L9.8 6.9 Z" fill="#555"/></svg><span style="left:51.20px;transform:scaleX(0.7661)">svchost.exe</span><span class="R" style="right:616.00px;transform:scaleX(0.9750)">0</span><span class="R" style="right:583.80px;transform:scaleX(0.8694)">3132</span><span style="left:183.30px;transform:scaleX(0.7261)">64-bit</span><svg class="a" style="left:217px;top:0" width="13" height="12"><path d="M5.4 10.2 L1.9 10.2 L1.9 0.8 L6.4 0.8 L9.6 4.4 L9.6 6" fill="none" stroke="#444" stroke-width="1.15"/><path d="M6.4 0.8 L5.6 3.8 L9.6 4.4" fill="none" stroke="#444" stroke-width="0.9"/><path d="M6 7.4 v-1 h1.2 M9.8 6.4 h1.2 v1 M11 10.2 v1.2 h-1.2 M7.2 11.4 h-1.2 v-1.2" fill="none" stroke="#3c90e6" stroke-width="1"/></svg><span style="left:229.70px;transform:scaleX(0.7514)">ReadFile</span><span style="left:294.20px;transform:scaleX(0.8099)">C:\Windows\System32\wbem\Reposito...</span><span style="left:451.80px;transform:scaleX(0.7678)">SUCCESS</span><span style="left:528.50px;transform:scaleX(0.7730)">Offset: 21,749,760,...</span><span style="left:607.30px;transform:scaleX(0.7995)">5/25/2021 12:42:...</span><span style="left:685.00px;transform:scaleX(0.8066)">C:\Windows\syste...</span></div>
<div class="r" style="top:301.28px"><span style="left:2.95px;transform:scaleX(0.7977)">12:42:...</span><svg class="a" style="left:38px;top:0" width="12" height="12"><rect x="1" y="1" width="11" height="1" fill="#9a9a9a"/><rect x="1" y="2" width="11" height="7" fill="#f6f6f6"/><rect x="2.2" y="4" width="0.8" height="2.2" fill="#c8c8c8"/><rect x="3.9" y="2.2" width="4.1" height="5.8" fill="#0a78dc"/><path d="M8.7 5 L10.9 5 L9.8 6.9 Z" fill="#555"/></svg><span style="left:51.20px;transform:scaleX(0.7661)">svchost.exe</span><span class="R" style="right:616.00px;transform:scaleX(0.9750)">0</span><span class="R" style="right:583.80px;transform:scaleX(0.8694)">3132</span><span style="left:183.30px;transform:scaleX(0.7261)">64-bit</span><svg class="a" style="left:217px;top:0" width="13" height="12"><path d="M5.4 10.2 L1.9 10.2 L1.9 0.8 L6.4 0.8 L9.6 4.4 L9.6 6" fill="none" stroke="#444" stroke-width="1.15"/><path d="M6.4 0.8 L5.6 3.8 L9.6 4.4" fill="none" stroke="#444" stroke-width="0.9"/><path d="M6 7.4 v-1 h1.2 M9.8 6.4 h1.2 v1 M11 10.2 v1.2 h-1.2 M7.2 11.4 h-1.2 v-1.2" fill="none" stroke="#3c90e6" stroke-width="1"/></svg><span style="left:229.70px;transform:scaleX(0.7514)">ReadFile</span><span style="left:294.20px;transform:scaleX(0.8099)">C:\Windows\System32\wbem\Reposito...</span><span style="left:451.80px;transform:scaleX(0.7678)">SUCCESS</span><span style="left:528.50px;transform:scaleX(0.7730)">Offset: 21,897,216,...</span><span style="left:607.30px;transform:scaleX(0.7995)">5/25/2021 12:42:...</span><span style="left:685.00px;transform:scaleX(0.8066)">C:\Windows\syste...</span></div>
<div class="r" style="top:312.96px"><span style="left:2.95px;transform:scaleX(0.7977)">12:42:...</span><svg class="a" style="left:38px;top:0" width="12" height="12"><rect x="1" y="1" width="11" height="1" fill="#9a9a9a"/><rect x="1" y="2" width="11" height="7" fill="#f6f6f6"/><rect x="2.2" y="4" width="0.8" height="2.2" fill="#c8c8c8"/><rect x="3.9" y="2.2" width="4.1" height="5.8" fill="#0a78dc"/><path d="M8.7 5 L10.9 5 L9.8 6.9 Z" fill="#555"/></svg><span style="left:51.20px;transform:scaleX(0.7661)">svchost.exe</span><span class="R" style="right:616.00px;transform:scaleX(0.9750)">0</span><span class="R" style="right:583.80px;transform:scaleX(0.8694)">3132</span><span style="left:183.30px;transform:scaleX(0.7261)">64-bit</span><svg class="a" style="left:217px;top:0" width="13" height="12"><path d="M5.4 10.2 L1.9 10.2 L1.9 0.8 L6.4 0.8 L9.6 4.4 L9.6 6" fill="none" stroke="#444" stroke-width="1.15"/><path d="M6.4 0.8 L5.6 3.8 L9.6 4.4" fill="none" stroke="#444" stroke-width="0.9"/><path d="M6 7.4 v-1 h1.2 M9.8 6.4 h1.2 v1 M11 10.2 v1.2 h-1.2 M7.2 11.4 h-1.2 v-1.2" fill="none" stroke="#3c90e6" stroke-width="1"/></svg><span style="left:229.70px;transform:scaleX(0.7514)">ReadFile</span><span style="left:294.20px;transform:scaleX(0.8099)">C:\Windows\System32\wbem\Reposito...</span><span style="left:451.80px;transform:scaleX(0.7678)">SUCCESS</span><span style="left:528.50px;transform:scaleX(0.7730)">Offset: 21,782,528,...</span><span style="left:607.30px;transform:scaleX(0.7995)">5/25/2021 12:42:...</span><span style="left:685.00px;transform:scaleX(0.8066)">C:\Windows\syste...</span></div>
<div class="r" style="top:324.64px"><span style="left:2.95px;transform:scaleX(0.7977)">12:42:...</span><svg class="a" style="left:38px;top:0" width="12" height="12"><rect x="1" y="1" width="11" height="1" fill="#9a9a9a"/><rect x="1" y="2" width="11" height="7" fill="#f6f6f6"/><rect x="2.2" y="4" width="0.8" height="2.2" fill="#c8c8c8"/><rect x="3.9" y="2.2" width="4.1" height="5.8" fill="#0a78dc"/><path d="M8.7 5 L10.9 5 L9.8 6.9 Z" fill="#555"/></svg><span style="left:51.20px;transform:scaleX(0.7661)">svchost.exe</span><span class="R" style="right:616.00px;transform:scaleX(0.9750)">0</span><span class="R" style="right:583.80px;transform:scaleX(0.8694)">3132</span><span style="left:183.30px;transform:scaleX(0.7261)">64-bit</span><svg class="a" style="left:217px;top:0" width="13" height="12"><path d="M5.4 10.2 L1.9 10.2 L1.9 0.8 L6.4 0.8 L9.6 4.4 L9.6 6" fill="none" stroke="#444" stroke-width="1.15"/><path d="M6.4 0.8 L5.6 3.8 L9.6 4.4" fill="none" stroke="#444" stroke-width="0.9"/><path d="M6 7.4 v-1 h1.2 M9.8 6.4 h1.2 v1 M11 10.2 v1.2 h-1.2 M7.2 11.4 h-1.2 v-1.2" fill="none" stroke="#3c90e6" stroke-width="1"/></svg><span style="left:229.70px;transform:scaleX(0.7514)">ReadFile</span><span style="left:294.20px;transform:scaleX(0.8099)">C:\Windows\System32\wbem\Reposito...</span><span style="left:451.80px;transform:scaleX(0.7678)">SUCCESS</span><span style="left:528.50px;transform:scaleX(0.7730)">Offset: 21,823,488,...</span><span style="left:607.30px;transform:scaleX(0.7995)">5/25/2021 12:42:...</span><span style="left:685.00px;transform:scaleX(0.8066)">C:\Windows\syste...</span></div>
<div class="r" style="top:336.32px"><span style="left:2.95px;transform:scaleX(0.7977)">12:42:...</span><svg class="a" style="left:38px;top:0" width="12" height="12"><rect x="1" y="1" width="11" height="1" fill="#9a9a9a"/><rect x="1" y="2" width="11" height="7" fill="#f6f6f6"/><rect x="2.2" y="4" width="0.8" height="2.2" fill="#c8c8c8"/><rect x="3.9" y="2.2" width="4.1" height="5.8" fill="#0a78dc"/><path d="M8.7 5 L10.9 5 L9.8 6.9 Z" fill="#555"/></svg><span style="left:51.20px;transform:scaleX(0.7661)">svchost.exe</span><span class="R" style="right:616.00px;transform:scaleX(0.9750)">0</span><span class="R" style="right:583.80px;transform:scaleX(0.8694)">3132</span><span style="left:183.30px;transform:scaleX(0.7261)">64-bit</span><svg class="a" style="left:217px;top:0" width="13" height="12"><path d="M5.4 10.2 L1.9 10.2 L1.9 0.8 L6.4 0.8 L9.6 4.4 L9.6 6" fill="none" stroke="#444" stroke-width="1.15"/><path d="M6.4 0.8 L5.6 3.8 L9.6 4.4" fill="none" stroke="#444" stroke-width="0.9"/><path d="M6 7.4 v-1 h1.2 M9.8 6.4 h1.2 v1 M11 10.2 v1.2 h-1.2 M7.2 11.4 h-1.2 v-1.2" fill="none" stroke="#3c90e6" stroke-width="1"/></svg><span style="left:229.70px;transform:scaleX(0.7514)">ReadFile</span><span style="left:294.20px;transform:scaleX(0.8099)">C:\Windows\System32\wbem\Reposito...</span><span style="left:451.80px;transform:scaleX(0.7678)">SUCCESS</span><span style="left:528.50px;transform:scaleX(0.7730)">Offset: 21,807,104,...</span><span style="left:607.30px;transform:scaleX(0.7995)">5/25/2021 12:42:...</span><span style="left:685.00px;transform:scaleX(0.8066)">C:\Windows\syste...</span></div>
<div class="r sel" style="top:348.00px"><span style="left:2.95px;transform:scaleX(0.7977)">12:42:...</span><svg class="a" style="left:39px;top:0" width="12" height="12"><rect x="0.6" y="0.6" width="10.8" height="11" fill="#86c0ee"/><rect x="2" y="2.2" width="8" height="7.6" fill="#4a9ae3"/><rect x="3.2" y="3.2" width="5.6" height="5.6" fill="#2b86db"/></svg><span style="left:51.20px;transform:scaleX(0.7661)">svchost.exe</span><span class="R" style="right:616.00px;transform:scaleX(0.9750)">0</span><span class="R" style="right:583.80px;transform:scaleX(0.8694)">3132</span><span style="left:183.30px;transform:scaleX(0.7261)">64-bit</span><svg class="a" style="left:217px;top:0" width="13" height="12"><rect x="1.4" y="0.6" width="10.4" height="11" fill="#5aa6e8"/><path d="M5.4 10.2 L1.9 10.2 L1.9 0.8 L6.4 0.8 L9.6 4.4 L9.6 6" fill="none" stroke="#a8d2f5" stroke-width="1.1"/><path d="M6.4 0.8 L5.6 3.8 L9.6 4.4" fill="none" stroke="#1a5fa8" stroke-width="0.9"/><path d="M6 7.4 v-1 h1.2 M9.8 6.4 h1.2 v1 M11 10.2 v1.2 h-1.2 M7.2 11.4 h-1.2 v-1.2" fill="none" stroke="#c8e4fa" stroke-width="1"/></svg><span style="left:229.70px;transform:scaleX(0.7514)">ReadFile</span><span style="left:294.20px;transform:scaleX(0.8099)">C:\Windows\System32\wbem\Reposito...</span><span style="left:451.80px;transform:scaleX(0.7678)">SUCCESS</span><span style="left:528.50px;transform:scaleX(0.7730)">Offset: 21,733,376,...</span><span style="left:607.30px;transform:scaleX(0.7995)">5/25/2021 12:42:...</span><span style="left:685.00px;transform:scaleX(0.8066)">C:\Windows\syste...</span></div>
<div class="r" style="top:359.68px"><span style="left:2.95px;transform:scaleX(0.7977)">12:42:...</span><svg class="a" style="left:38px;top:0" width="12" height="12"><rect x="1" y="1" width="11" height="1" fill="#9a9a9a"/><rect x="1" y="2" width="11" height="7" fill="#f6f6f6"/><rect x="2.2" y="4" width="0.8" height="2.2" fill="#c8c8c8"/><rect x="3.9" y="2.2" width="4.1" height="5.8" fill="#0a78dc"/><path d="M8.7 5 L10.9 5 L9.8 6.9 Z" fill="#555"/></svg><span style="left:51.20px;transform:scaleX(0.7661)">svchost.exe</span><span class="R" style="right:616.00px;transform:scaleX(0.9750)">0</span><span class="R" style="right:583.80px;transform:scaleX(0.8694)">3132</span><span style="left:183.30px;transform:scaleX(0.7261)">64-bit</span><svg class="a" style="left:217px;top:0" width="13" height="12"><path d="M5.4 10.2 L1.9 10.2 L1.9 0.8 L6.4 0.8 L9.6 4.4 L9.6 6" fill="none" stroke="#444" stroke-width="1.15"/><path d="M6.4 0.8 L5.6 3.8 L9.6 4.4" fill="none" stroke="#444" stroke-width="0.9"/><path d="M6 7.4 v-1 h1.2 M9.8 6.4 h1.2 v1 M11 10.2 v1.2 h-1.2 M7.2 11.4 h-1.2 v-1.2" fill="none" stroke="#3c90e6" stroke-width="1"/></svg><span style="left:229.70px;transform:scaleX(0.7514)">ReadFile</span><span style="left:294.20px;transform:scaleX(0.8099)">C:\Windows\System32\wbem\Reposito...</span><span style="left:451.80px;transform:scaleX(0.7678)">SUCCESS</span><span style="left:528.50px;transform:scaleX(0.7730)">Offset: 23,044,096,...</span><span style="left:607.30px;transform:scaleX(0.7995)">5/25/2021 12:42:...</span><span style="left:685.00px;transform:scaleX(0.8066)">C:\Windows\syste...</span></div>
<div class="r" style="top:371.36px"><span style="left:2.95px;transform:scaleX(0.7977)">12:42:...</span><svg class="a" style="left:38px;top:0" width="12" height="12"><rect x="1" y="1" width="11" height="1" fill="#9a9a9a"/><rect x="1" y="2" width="11" height="7" fill="#f6f6f6"/><rect x="2.2" y="4" width="0.8" height="2.2" fill="#c8c8c8"/><rect x="3.9" y="2.2" width="4.1" height="5.8" fill="#0a78dc"/><path d="M8.7 5 L10.9 5 L9.8 6.9 Z" fill="#555"/></svg><span style="left:51.20px;transform:scaleX(0.7661)">svchost.exe</span><span class="R" style="right:616.00px;transform:scaleX(0.9750)">0</span><span class="R" style="right:583.80px;transform:scaleX(0.8694)">3132</span><span style="left:183.30px;transform:scaleX(0.7261)">64-bit</span><svg class="a" style="left:217px;top:0" width="13" height="12"><path d="M5.4 10.2 L1.9 10.2 L1.9 0.8 L6.4 0.8 L9.6 4.4 L9.6 6" fill="none" stroke="#444" stroke-width="1.15"/><path d="M6.4 0.8 L5.6 3.8 L9.6 4.4" fill="none" stroke="#444" stroke-width="0.9"/><path d="M6 7.4 v-1 h1.2 M9.8 6.4 h1.2 v1 M11 10.2 v1.2 h-1.2 M7.2 11.4 h-1.2 v-1.2" fill="none" stroke="#3c90e6" stroke-width="1"/></svg><span style="left:229.70px;transform:scaleX(0.7514)">ReadFile</span><span style="left:294.20px;transform:scaleX(0.8099)">C:\Windows\System32\wbem\Reposito...</span><span style="left:451.80px;transform:scaleX(0.7678)">SUCCESS</span><span style="left:528.50px;transform:scaleX(0.7730)">Offset: 21,880,832,...</span><span style="left:607.30px;transform:scaleX(0.7995)">5/25/2021 12:42:...</span><span style="left:685.00px;transform:scaleX(0.8066)">C:\Windows\syste...</span></div>
<div class="r" style="top:383.04px"><span style="left:2.95px;transform:scaleX(0.7977)">12:42:...</span><svg class="a" style="left:38px;top:0" width="12" height="12"><rect x="1" y="1" width="11" height="1" fill="#9a9a9a"/><rect x="1" y="2" width="11" height="7" fill="#f6f6f6"/><rect x="2.2" y="4" width="0.8" height="2.2" fill="#c8c8c8"/><rect x="3.9" y="2.2" width="4.1" height="5.8" fill="#0a78dc"/><path d="M8.7 5 L10.9 5 L9.8 6.9 Z" fill="#555"/></svg><span style="left:51.20px;transform:scaleX(0.7661)">svchost.exe</span><span class="R" style="right:616.00px;transform:scaleX(0.9750)">0</span><span class="R" style="right:583.80px;transform:scaleX(0.8694)">3132</span><span style="left:183.30px;transform:scaleX(0.7261)">64-bit</span><svg class="a" style="left:217px;top:0" width="13" height="12"><path d="M5.4 10.2 L1.9 10.2 L1.9 0.8 L6.4 0.8 L9.6 4.4 L9.6 6" fill="none" stroke="#444" stroke-width="1.15"/><path d="M6.4 0.8 L5.6 3.8 L9.6 4.4" fill="none" stroke="#444" stroke-width="0.9"/><path d="M6 7.4 v-1 h1.2 M9.8 6.4 h1.2 v1 M11 10.2 v1.2 h-1.2 M7.2 11.4 h-1.2 v-1.2" fill="none" stroke="#3c90e6" stroke-width="1"/></svg><span style="left:229.70px;transform:scaleX(0.7514)">ReadFile</span><span style="left:294.20px;transform:scaleX(0.8099)">C:\Windows\System32\wbem\Reposito...</span><span style="left:451.80px;transform:scaleX(0.7678)">SUCCESS</span><span style="left:528.50px;transform:scaleX(0.7730)">Offset: 21,692,416,...</span><span style="left:607.30px;transform:scaleX(0.7995)">5/25/2021 12:42:...</span><span style="left:685.00px;transform:scaleX(0.8066)">C:\Windows\syste...</span></div>
<div class="r" style="top:394.72px"><span style="left:2.95px;transform:scaleX(0.7977)">12:42:...</span><svg class="a" style="left:38px;top:0" width="12" height="12"><rect x="1" y="1" width="11" height="1" fill="#9a9a9a"/><rect x="1" y="2" width="11" height="7" fill="#f6f6f6"/><rect x="2.2" y="4" width="0.8" height="2.2" fill="#c8c8c8"/><rect x="3.9" y="2.2" width="4.1" height="5.8" fill="#0a78dc"/><path d="M8.7 5 L10.9 5 L9.8 6.9 Z" fill="#555"/></svg><span style="left:51.20px;transform:scaleX(0.7661)">svchost.exe</span><span class="R" style="right:616.00px;transform:scaleX(0.9750)">0</span><span class="R" style="right:583.80px;transform:scaleX(0.8694)">3132</span><span style="left:183.30px;transform:scaleX(0.7261)">64-bit</span><svg class="a" style="left:217px;top:0" width="13" height="12"><path d="M5.4 10.2 L1.9 10.2 L1.9 0.8 L6.4 0.8 L9.6 4.4 L9.6 6" fill="none" stroke="#444" stroke-width="1.15"/><path d="M6.4 0.8 L5.6 3.8 L9.6 4.4" fill="none" stroke="#444" stroke-width="0.9"/><path d="M6 7.4 v-1 h1.2 M9.8 6.4 h1.2 v1 M11 10.2 v1.2 h-1.2 M7.2 11.4 h-1.2 v-1.2" fill="none" stroke="#3c90e6" stroke-width="1"/></svg><span style="left:229.70px;transform:scaleX(0.7514)">ReadFile</span><span style="left:294.20px;transform:scaleX(0.8099)">C:\Windows\System32\wbem\Reposito...</span><span style="left:451.80px;transform:scaleX(0.7678)">SUCCESS</span><span style="left:528.50px;transform:scaleX(0.7730)">Offset: 21,651,456,...</span><span style="left:607.30px;transform:scaleX(0.7995)">5/25/2021 12:42:...</span><span style="left:685.00px;transform:scaleX(0.8066)">C:\Windows\syste...</span></div>
<div class="r" style="top:406.40px"><span style="left:2.95px;transform:scaleX(0.7977)">12:42:...</span><svg class="a" style="left:38px;top:0" width="12" height="12"><rect x="1" y="1" width="11" height="1" fill="#9a9a9a"/><rect x="1" y="2" width="11" height="7" fill="#f6f6f6"/><rect x="2.2" y="4" width="0.8" height="2.2" fill="#c8c8c8"/><rect x="3.9" y="2.2" width="4.1" height="5.8" fill="#0a78dc"/><path d="M8.7 5 L10.9 5 L9.8 6.9 Z" fill="#555"/></svg><span style="left:51.20px;transform:scaleX(0.7661)">svchost.exe</span><span class="R" style="right:616.00px;transform:scaleX(0.9750)">0</span><span class="R" style="right:583.80px;transform:scaleX(0.8694)">3132</span><span style="left:183.30px;transform:scaleX(0.7261)">64-bit</span><svg class="a" style="left:217px;top:0" width="13" height="12"><path d="M5.4 10.2 L1.9 10.2 L1.9 0.8 L6.4 0.8 L9.6 4.4 L9.6 6" fill="none" stroke="#444" stroke-width="1.15"/><path d="M6.4 0.8 L5.6 3.8 L9.6 4.4" fill="none" stroke="#444" stroke-width="0.9"/><path d="M6 7.4 v-1 h1.2 M9.8 6.4 h1.2 v1 M11 10.2 v1.2 h-1.2 M7.2 11.4 h-1.2 v-1.2" fill="none" stroke="#3c90e6" stroke-width="1"/></svg><span style="left:229.70px;transform:scaleX(0.7514)">ReadFile</span><span style="left:294.20px;transform:scaleX(0.8099)">C:\Windows\System32\wbem\Reposito...</span><span style="left:451.80px;transform:scaleX(0.7678)">SUCCESS</span><span style="left:528.50px;transform:scaleX(0.7730)">Offset: 21,889,024,...</span><span style="left:607.30px;transform:scaleX(0.7995)">5/25/2021 12:42:...</span><span style="left:685.00px;transform:scaleX(0.8066)">C:\Windows\syste...</span></div>
<div class="r" style="top:418.08px"><span style="left:2.95px;transform:scaleX(0.7977)">12:42:...</span><svg class="a" style="left:38px;top:0" width="12" height="12"><rect x="1" y="1" width="11" height="1" fill="#9a9a9a"/><rect x="1" y="2" width="11" height="7" fill="#f6f6f6"/><rect x="2.2" y="4" width="0.8" height="2.2" fill="#c8c8c8"/><rect x="3.9" y="2.2" width="4.1" height="5.8" fill="#0a78dc"/><path d="M8.7 5 L10.9 5 L9.8 6.9 Z" fill="#555"/></svg><span style="left:51.20px;transform:scaleX(0.7661)">svchost.exe</span><span class="R" style="right:616.00px;transform:scaleX(0.9750)">0</span><span class="R" style="right:583.80px;transform:scaleX(0.8694)">3132</span><span style="left:183.30px;transform:scaleX(0.7261)">64-bit</span><svg class="a" style="left:217px;top:0" width="13" height="12"><path d="M5.4 10.2 L1.9 10.2 L1.9 0.8 L6.4 0.8 L9.6 4.4 L9.6 6" fill="none" stroke="#444" stroke-width="1.15"/><path d="M6.4 0.8 L5.6 3.8 L9.6 4.4" fill="none" stroke="#444" stroke-width="0.9"/><path d="M6 7.4 v-1 h1.2 M9.8 6.4 h1.2 v1 M11 10.2 v1.2 h-1.2 M7.2 11.4 h-1.2 v-1.2" fill="none" stroke="#3c90e6" stroke-width="1"/></svg><span style="left:229.70px;transform:scaleX(0.7514)">ReadFile</span><span style="left:294.20px;transform:scaleX(0.8099)">C:\Windows\System32\wbem\Reposito...</span><span style="left:451.80px;transform:scaleX(0.7678)">SUCCESS</span><span style="left:528.50px;transform:scaleX(0.7730)">Offset: 22,036,480,...</span><span style="left:607.30px;transform:scaleX(0.7995)">5/25/2021 12:42:...</span><span style="left:685.00px;transform:scaleX(0.8066)">C:\Windows\syste...</span></div>
<div class="r" style="top:429.76px"><span style="left:2.95px;transform:scaleX(0.7977)">12:42:...</span><svg class="a" style="left:38px;top:0" width="12" height="12"><rect x="1" y="1" width="11" height="1" fill="#9a9a9a"/><rect x="1" y="2" width="11" height="7" fill="#f6f6f6"/><rect x="2.2" y="4" width="0.8" height="2.2" fill="#c8c8c8"/><rect x="3.9" y="2.2" width="4.1" height="5.8" fill="#0a78dc"/><path d="M8.7 5 L10.9 5 L9.8 6.9 Z" fill="#555"/></svg><span style="left:51.20px;transform:scaleX(0.7661)">svchost.exe</span><span class="R" style="right:616.00px;transform:scaleX(0.9750)">0</span><span class="R" style="right:583.80px;transform:scaleX(0.8694)">3132</span><span style="left:183.30px;transform:scaleX(0.7261)">64-bit</span><svg class="a" style="left:217px;top:0" width="13" height="12"><path d="M5.4 10.2 L1.9 10.2 L1.9 0.8 L6.4 0.8 L9.6 4.4 L9.6 6" fill="none" stroke="#444" stroke-width="1.15"/><path d="M6.4 0.8 L5.6 3.8 L9.6 4.4" fill="none" stroke="#444" stroke-width="0.9"/><path d="M6 7.4 v-1 h1.2 M9.8 6.4 h1.2 v1 M11 10.2 v1.2 h-1.2 M7.2 11.4 h-1.2 v-1.2" fill="none" stroke="#3c90e6" stroke-width="1"/></svg><span style="left:229.70px;transform:scaleX(0.7514)">ReadFile</span><span style="left:294.20px;transform:scaleX(0.8099)">C:\Windows\System32\wbem\Reposito...</span><span style="left:451.80px;transform:scaleX(0.7678)">SUCCESS</span><span style="left:528.50px;transform:scaleX(0.7730)">Offset: 23,543,808,...</span><span style="left:607.30px;transform:scaleX(0.7995)">5/25/2021 12:42:...</span><span style="left:685.00px;transform:scaleX(0.8066)">C:\Windows\syste...</span></div>
<div class="r" style="top:441.44px"><span style="left:2.95px;transform:scaleX(0.7977)">12:42:...</span><svg class="a" style="left:38px;top:0" width="12" height="12"><rect x="1" y="1" width="11" height="1" fill="#9a9a9a"/><rect x="1" y="2" width="11" height="7" fill="#f6f6f6"/><rect x="2.2" y="4" width="0.8" height="2.2" fill="#c8c8c8"/><rect x="3.9" y="2.2" width="4.1" height="5.8" fill="#0a78dc"/><path d="M8.7 5 L10.9 5 L9.8 6.9 Z" fill="#555"/></svg><span style="left:51.20px;transform:scaleX(0.7661)">svchost.exe</span><span class="R" style="right:616.00px;transform:scaleX(0.9750)">0</span><span class="R" style="right:583.80px;transform:scaleX(0.8694)">3132</span><span style="left:183.30px;transform:scaleX(0.7261)">64-bit</span><svg class="a" style="left:217px;top:0" width="13" height="12"><path d="M5.4 10.2 L1.9 10.2 L1.9 0.8 L6.4 0.8 L9.6 4.4 L9.6 6" fill="none" stroke="#444" stroke-width="1.15"/><path d="M6.4 0.8 L5.6 3.8 L9.6 4.4" fill="none" stroke="#444" stroke-width="0.9"/><path d="M6 7.4 v-1 h1.2 M9.8 6.4 h1.2 v1 M11 10.2 v1.2 h-1.2 M7.2 11.4 h-1.2 v-1.2" fill="none" stroke="#3c90e6" stroke-width="1"/></svg><span style="left:229.70px;transform:scaleX(0.7514)">ReadFile</span><span style="left:294.20px;transform:scaleX(0.8099)">C:\Windows\System32\wbem\Reposito...</span><span style="left:451.80px;transform:scaleX(0.7678)">SUCCESS</span><span style="left:528.50px;transform:scaleX(0.7730)">Offset: 21,790,720,...</span><span style="left:607.30px;transform:scaleX(0.7995)">5/25/2021 12:42:...</span><span style="left:685.00px;transform:scaleX(0.8066)">C:\Windows\syste...</span></div>
<div class="r" style="top:453.12px"><span style="left:2.95px;transform:scaleX(0.7977)">12:42:...</span><svg class="a" style="left:38px;top:0" width="12" height="12"><rect x="1" y="1" width="11" height="1" fill="#9a9a9a"/><rect x="1" y="2" width="11" height="7" fill="#f6f6f6"/><rect x="2.2" y="4" width="0.8" height="2.2" fill="#c8c8c8"/><rect x="3.9" y="2.2" width="4.1" height="5.8" fill="#0a78dc"/><path d="M8.7 5 L10.9 5 L9.8 6.9 Z" fill="#555"/></svg><span style="left:51.20px;transform:scaleX(0.7661)">svchost.exe</span><span class="R" style="right:616.00px;transform:scaleX(0.9750)">0</span><span class="R" style="right:583.80px;transform:scaleX(0.8694)">3132</span><span style="left:183.30px;transform:scaleX(0.7261)">64-bit</span><svg class="a" style="left:217px;top:0" width="13" height="12"><path d="M5.4 10.2 L1.9 10.2 L1.9 0.8 L6.4 0.8 L9.6 4.4 L9.6 6" fill="none" stroke="#444" stroke-width="1.15"/><path d="M6.4 0.8 L5.6 3.8 L9.6 4.4" fill="none" stroke="#444" stroke-width="0.9"/><path d="M6 7.4 v-1 h1.2 M9.8 6.4 h1.2 v1 M11 10.2 v1.2 h-1.2 M7.2 11.4 h-1.2 v-1.2" fill="none" stroke="#3c90e6" stroke-width="1"/></svg><span style="left:229.70px;transform:scaleX(0.7514)">ReadFile</span><span style="left:294.20px;transform:scaleX(0.8099)">C:\Windows\System32\wbem\Reposito...</span><span style="left:451.80px;transform:scaleX(0.7678)">SUCCESS</span><span style="left:528.50px;transform:scaleX(0.7730)">Offset: 21,774,336,...</span><span style="left:607.30px;transform:scaleX(0.7995)">5/25/2021 12:42:...</span><span style="left:685.00px;transform:scaleX(0.8066)">C:\Windows\syste...</span></div>
<div class="r" style="top:464.80px"><span style="left:2.95px;transform:scaleX(0.7977)">12:42:...</span><svg class="a" style="left:38px;top:0" width="12" height="12"><rect x="1" y="1" width="11" height="1" fill="#9a9a9a"/><rect x="1" y="2" width="11" height="7" fill="#f6f6f6"/><rect x="2.2" y="4" width="0.8" height="2.2" fill="#c8c8c8"/><rect x="3.9" y="2.2" width="4.1" height="5.8" fill="#0a78dc"/><path d="M8.7 5 L10.9 5 L9.8 6.9 Z" fill="#555"/></svg><span style="left:51.20px;transform:scaleX(0.7661)">svchost.exe</span><span class="R" style="right:616.00px;transform:scaleX(0.9750)">0</span><span class="R" style="right:583.80px;transform:scaleX(0.8694)">3132</span><span style="left:183.30px;transform:scaleX(0.7261)">64-bit</span><svg class="a" style="left:217px;top:0" width="13" height="12"><path d="M5.4 10.2 L1.9 10.2 L1.9 0.8 L6.4 0.8 L9.6 4.4 L9.6 6" fill="none" stroke="#444" stroke-width="1.15"/><path d="M6.4 0.8 L5.6 3.8 L9.6 4.4" fill="none" stroke="#444" stroke-width="0.9"/><path d="M6 7.4 v-1 h1.2 M9.8 6.4 h1.2 v1 M11 10.2 v1.2 h-1.2 M7.2 11.4 h-1.2 v-1.2" fill="none" stroke="#3c90e6" stroke-width="1"/></svg><span style="left:229.70px;transform:scaleX(0.7514)">ReadFile</span><span style="left:294.20px;transform:scaleX(0.8099)">C:\Windows\System32\wbem\Reposito...</span><span style="left:451.80px;transform:scaleX(0.7678)">SUCCESS</span><span style="left:528.50px;transform:scaleX(0.7730)">Offset: 21,954,560,...</span><span style="left:607.30px;transform:scaleX(0.7995)">5/25/2021 12:42:...</span><span style="left:685.00px;transform:scaleX(0.8066)">C:\Windows\syste...</span></div>
<div class="r" style="top:476.48px"><span style="left:2.95px;transform:scaleX(0.7977)">12:42:...</span><svg class="a" style="left:38px;top:0" width="12" height="12"><rect x="1" y="1" width="11" height="1" fill="#9a9a9a"/><rect x="1" y="2" width="11" height="7" fill="#f6f6f6"/><rect x="2.2" y="4" width="0.8" height="2.2" fill="#c8c8c8"/><rect x="3.9" y="2.2" width="4.1" height="5.8" fill="#0a78dc"/><path d="M8.7 5 L10.9 5 L9.8 6.9 Z" fill="#555"/></svg><span style="left:51.20px;transform:scaleX(0.7661)">svchost.exe</span><span class="R" style="right:616.00px;transform:scaleX(0.9750)">0</span><span class="R" style="right:583.80px;transform:scaleX(0.8694)">3132</span><span style="left:183.30px;transform:scaleX(0.7261)">64-bit</span><svg class="a" style="left:217px;top:0" width="13" height="12"><path d="M5.4 10.2 L1.9 10.2 L1.9 0.8 L6.4 0.8 L9.6 4.4 L9.6 6" fill="none" stroke="#444" stroke-width="1.15"/><path d="M6.4 0.8 L5.6 3.8 L9.6 4.4" fill="none" stroke="#444" stroke-width="0.9"/><path d="M6 7.4 v-1 h1.2 M9.8 6.4 h1.2 v1 M11 10.2 v1.2 h-1.2 M7.2 11.4 h-1.2 v-1.2" fill="none" stroke="#3c90e6" stroke-width="1"/></svg><span style="left:229.70px;transform:scaleX(0.7514)">ReadFile</span><span style="left:294.20px;transform:scaleX(0.8099)">C:\Windows\System32\wbem\Reposito...</span><span style="left:451.80px;transform:scaleX(0.7678)">SUCCESS</span><span style="left:528.50px;transform:scaleX(0.7730)">Offset: 21,643,264,...</span><span style="left:607.30px;transform:scaleX(0.7995)">5/25/2021 12:42:...</span><span style="left:685.00px;transform:scaleX(0.8066)">C:\Windows\syste...</span></div>
<div class="r" style="top:488.16px"><span style="left:2.95px;transform:scaleX(0.7977)">12:42:...</span><svg class="a" style="left:38px;top:0" width="12" height="12"><rect x="1" y="1" width="11" height="1" fill="#9a9a9a"/><rect x="1" y="2" width="11" height="7" fill="#f6f6f6"/><rect x="2.2" y="4" width="0.8" height="2.2" fill="#c8c8c8"/><rect x="3.9" y="2.2" width="4.1" height="5.8" fill="#0a78dc"/><path d="M8.7 5 L10.9 5 L9.8 6.9 Z" fill="#555"/></svg><span style="left:51.20px;transform:scaleX(0.7661)">svchost.exe</span><span class="R" style="right:616.00px;transform:scaleX(0.9750)">0</span><span class="R" style="right:583.80px;transform:scaleX(0.8694)">3132</span><span style="left:183.30px;transform:scaleX(0.7261)">64-bit</span><svg class="a" style="left:217px;top:0" width="13" height="12"><path d="M5.4 10.2 L1.9 10.2 L1.9 0.8 L6.4 0.8 L9.6 4.4 L9.6 6" fill="none" stroke="#444" stroke-width="1.15"/><path d="M6.4 0.8 L5.6 3.8 L9.6 4.4" fill="none" stroke="#444" stroke-width="0.9"/><path d="M6 7.4 v-1 h1.2 M9.8 6.4 h1.2 v1 M11 10.2 v1.2 h-1.2 M7.2 11.4 h-1.2 v-1.2" fill="none" stroke="#3c90e6" stroke-width="1"/></svg><span style="left:229.70px;transform:scaleX(0.7514)">ReadFile</span><span style="left:294.20px;transform:scaleX(0.8099)">C:\Windows\System32\wbem\Reposito...</span><span style="left:451.80px;transform:scaleX(0.7678)">SUCCESS</span><span style="left:528.50px;transform:scaleX(0.7730)">Offset: 20,332,544,...</span><span style="left:607.30px;transform:scaleX(0.7995)">5/25/2021 12:42:...</span><span style="left:685.00px;transform:scaleX(0.8066)">C:\Windows\syste...</span></div>
<div class="r" style="top:499.84px"><span style="left:2.95px;transform:scaleX(0.7977)">12:42:...</span><svg class="a" style="left:38px;top:0" width="12" height="12"><rect x="1" y="1" width="11" height="1" fill="#9a9a9a"/><rect x="1" y="2" width="11" height="7" fill="#f6f6f6"/><rect x="2.2" y="4" width="0.8" height="2.2" fill="#c8c8c8"/><rect x="3.9" y="2.2" width="4.1" height="5.8" fill="#0a78dc"/><path d="M8.7 5 L10.9 5 L9.8 6.9 Z" fill="#555"/></svg><span style="left:51.20px;transform:scaleX(0.7661)">svchost.exe</span><span class="R" style="right:616.00px;transform:scaleX(0.9750)">0</span><span class="R" style="right:583.80px;transform:scaleX(0.8694)">3132</span><span style="left:183.30px;transform:scaleX(0.7261)">64-bit</span><svg class="a" style="left:217px;top:0" width="13" height="12"><path d="M5.4 10.2 L1.9 10.2 L1.9 0.8 L6.4 0.8 L9.6 4.4 L9.6 6" fill="none" stroke="#444" stroke-width="1.15"/><path d="M6.4 0.8 L5.6 3.8 L9.6 4.4" fill="none" stroke="#444" stroke-width="0.9"/><path d="M6 7.4 v-1 h1.2 M9.8 6.4 h1.2 v1 M11 10.2 v1.2 h-1.2 M7.2 11.4 h-1.2 v-1.2" fill="none" stroke="#3c90e6" stroke-width="1"/></svg><span style="left:229.70px;transform:scaleX(0.7514)">ReadFile</span><span style="left:294.20px;transform:scaleX(0.8099)">C:\Windows\System32\wbem\Reposito...</span><span style="left:451.80px;transform:scaleX(0.7678)">SUCCESS</span><span style="left:528.50px;transform:scaleX(0.7730)">Offset: 21,757,952,...</span><span style="left:607.30px;transform:scaleX(0.7995)">5/25/2021 12:42:...</span><span style="left:685.00px;transform:scaleX(0.8066)">C:\Windows\syste...</span></div>
<div class="r" style="top:511.52px"><span style="left:2.95px;transform:scaleX(0.7977)">12:42:...</span><svg class="a" style="left:38px;top:0" width="12" height="12"><rect x="1" y="1" width="11" height="1" fill="#9a9a9a"/><rect x="1" y="2" width="11" height="7" fill="#f6f6f6"/><rect x="2.2" y="4" width="0.8" height="2.2" fill="#c8c8c8"/><rect x="3.9" y="2.2" width="4.1" height="5.8" fill="#0a78dc"/><path d="M8.7 5 L10.9 5 L9.8 6.9 Z" fill="#555"/></svg><span style="left:51.20px;transform:scaleX(0.7661)">svchost.exe</span><span class="R" style="right:616.00px;transform:scaleX(0.9750)">0</span><span class="R" style="right:583.80px;transform:scaleX(0.8694)">3132</span><span style="left:183.30px;transform:scaleX(0.7261)">64-bit</span><svg class="a" style="left:217px;top:0" width="13" height="12"><path d="M5.4 10.2 L1.9 10.2 L1.9 0.8 L6.4 0.8 L9.6 4.4 L9.6 6" fill="none" stroke="#444" stroke-width="1.15"/><path d="M6.4 0.8 L5.6 3.8 L9.6 4.4" fill="none" stroke="#444" stroke-width="0.9"/><path d="M6 7.4 v-1 h1.2 M9.8 6.4 h1.2 v1 M11 10.2 v1.2 h-1.2 M7.2 11.4 h-1.2 v-1.2" fill="none" stroke="#3c90e6" stroke-width="1"/></svg><span style="left:229.70px;transform:scaleX(0.7514)">ReadFile</span><span style="left:294.20px;transform:scaleX(0.8099)">C:\Windows\System32\wbem\Reposito...</span><span style="left:451.80px;transform:scaleX(0.7678)">SUCCESS</span><span style="left:528.50px;transform:scaleX(0.7730)">Offset: 21,921,792,...</span><span style="left:607.30px;transform:scaleX(0.7995)">5/25/2021 12:42:...</span><span style="left:685.00px;transform:scaleX(0.8066)">C:\Windows\syste...</span></div>
<div class="r" style="top:523.20px"><span style="left:2.95px;transform:scaleX(0.7977)">12:42:...</span><svg class="a" style="left:38px;top:0" width="12" height="12"><rect x="1" y="1" width="11" height="1" fill="#9a9a9a"/><rect x="1" y="2" width="11" height="7" fill="#f6f6f6"/><rect x="2.2" y="4" width="0.8" height="2.2" fill="#c8c8c8"/><rect x="3.9" y="2.2" width="4.1" height="5.8" fill="#0a78dc"/><path d="M8.7 5 L10.9 5 L9.8 6.9 Z" fill="#555"/></svg><span style="left:51.20px;transform:scaleX(0.7661)">svchost.exe</span><span class="R" style="right:616.00px;transform:scaleX(0.9750)">0</span><span class="R" style="right:583.80px;transform:scaleX(0.8694)">3132</span><span style="left:183.30px;transform:scaleX(0.7261)">64-bit</span><svg class="a" style="left:217px;top:0" width="13" height="12"><path d="M5.4 10.2 L1.9 10.2 L1.9 0.8 L6.4 0.8 L9.6 4.4 L9.6 6" fill="none" stroke="#444" stroke-width="1.15"/><path d="M6.4 0.8 L5.6 3.8 L9.6 4.4" fill="none" stroke="#444" stroke-width="0.9"/><path d="M6 7.4 v-1 h1.2 M9.8 6.4 h1.2 v1 M11 10.2 v1.2 h-1.2 M7.2 11.4 h-1.2 v-1.2" fill="none" stroke="#3c90e6" stroke-width="1"/></svg><span style="left:229.70px;transform:scaleX(0.7514)">ReadFile</span><span style="left:294.20px;transform:scaleX(0.8099)">C:\Windows\System32\wbem\Reposito...</span><span style="left:451.80px;transform:scaleX(0.7678)">SUCCESS</span><span style="left:528.50px;transform:scaleX(0.7730)">Offset: 21,831,680,...</span><span style="left:607.30px;transform:scaleX(0.7995)">5/25/2021 12:42:...</span><span style="left:685.00px;transform:scaleX(0.8066)">C:\Windows\syste...</span></div>
<div class="r" style="top:534.88px"><span style="left:2.95px;transform:scaleX(0.7977)">12:42:...</span><svg class="a" style="left:38px;top:0" width="12" height="12"><rect x="1" y="1" width="11" height="1" fill="#9a9a9a"/><rect x="1" y="2" width="11" height="7" fill="#f6f6f6"/><rect x="2.2" y="4" width="0.8" height="2.2" fill="#c8c8c8"/><rect x="3.9" y="2.2" width="4.1" height="5.8" fill="#0a78dc"/><path d="M8.7 5 L10.9 5 L9.8 6.9 Z" fill="#555"/></svg><span style="left:51.20px;transform:scaleX(0.7661)">svchost.exe</span><span class="R" style="right:616.00px;transform:scaleX(0.9750)">0</span><span class="R" style="right:583.80px;transform:scaleX(0.8694)">3132</span><span style="left:183.30px;transform:scaleX(0.7261)">64-bit</span><svg class="a" style="left:217px;top:0" width="13" height="12"><path d="M5.4 10.2 L1.9 10.2 L1.9 0.8 L6.4 0.8 L9.6 4.4 L9.6 6" fill="none" stroke="#444" stroke-width="1.15"/><path d="M6.4 0.8 L5.6 3.8 L9.6 4.4" fill="none" stroke="#444" stroke-width="0.9"/><path d="M6 7.4 v-1 h1.2 M9.8 6.4 h1.2 v1 M11 10.2 v1.2 h-1.2 M7.2 11.4 h-1.2 v-1.2" fill="none" stroke="#3c90e6" stroke-width="1"/></svg><span style="left:229.70px;transform:scaleX(0.7514)">ReadFile</span><span style="left:294.20px;transform:scaleX(0.8099)">C:\Windows\System32\wbem\Reposito...</span><span style="left:451.80px;transform:scaleX(0.7678)">SUCCESS</span><span style="left:528.50px;transform:scaleX(0.7730)">Offset: 21,848,064,...</span><span style="left:607.30px;transform:scaleX(0.7995)">5/25/2021 12:42:...</span><span style="left:685.00px;transform:scaleX(0.8066)">C:\Windows\syste...</span></div>
<div class="r" style="top:546.56px"><span style="left:2.95px;transform:scaleX(0.7977)">12:42:...</span><svg class="a" style="left:38px;top:0" width="12" height="12"><rect x="1" y="1" width="11" height="1" fill="#9a9a9a"/><rect x="1" y="2" width="11" height="7" fill="#f6f6f6"/><rect x="2.2" y="4" width="0.8" height="2.2" fill="#c8c8c8"/><rect x="3.9" y="2.2" width="4.1" height="5.8" fill="#0a78dc"/><path d="M8.7 5 L10.9 5 L9.8 6.9 Z" fill="#555"/></svg><span style="left:51.20px;transform:scaleX(0.7661)">svchost.exe</span><span class="R" style="right:616.00px;transform:scaleX(0.9750)">0</span><span class="R" style="right:583.80px;transform:scaleX(0.8694)">3132</span><span style="left:183.30px;transform:scaleX(0.7261)">64-bit</span><svg class="a" style="left:216.4px;top:0" width="13" height="12"><rect x="0.6" y="2" width="9.2" height="8.7" fill="#111"/><rect x="1.3" y="2.7" width="2.3" height="5.2" fill="#b484f8"/><rect x="1.3" y="8.5" width="2.3" height="1.6" fill="#b484f8"/><rect x="4.3" y="2.7" width="2.3" height="2.3" fill="#a0a0a0"/><rect x="4.3" y="5.6" width="2.3" height="2.3" fill="#9a6ae4"/><rect x="4.3" y="8.5" width="2.3" height="1.6" fill="#7e50c0"/><rect x="7.3" y="2.7" width="2.3" height="5.2" fill="#fff"/><rect x="7.3" y="8.5" width="2.3" height="1.6" fill="#b484f8"/><path d="M9.4 0.3 L11.3 2.1 L9.4 3.9 L7.5 2.1 Z" fill="#fff" stroke="#2a2a2a" stroke-width="1.1" stroke-linejoin="round"/></svg><span style="left:229.70px;transform:scaleX(0.7514)">RegOpenKey</span><span style="left:294.20px;transform:scaleX(0.8099)">HKLM</span><span style="left:451.80px;transform:scaleX(0.7678)">SUCCESS</span><span style="left:528.50px;transform:scaleX(0.7730)">Desired Access: M...</span><span style="left:607.30px;transform:scaleX(0.7995)">5/25/2021 12:42:...</span><span style="left:685.00px;transform:scaleX(0.8066)">C:\Windows\syste...</span></div>
<div class="r" style="top:558.24px"><span style="left:2.95px;transform:scaleX(0.7977)">12:42:...</span><svg class="a" style="left:38px;top:0" width="12" height="12"><rect x="1" y="1" width="11" height="1" fill="#9a9a9a"/><rect x="1" y="2" width="11" height="7" fill="#f6f6f6"/><rect x="2.2" y="4" width="0.8" height="2.2" fill="#c8c8c8"/><rect x="3.9" y="2.2" width="4.1" height="5.8" fill="#0a78dc"/><path d="M8.7 5 L10.9 5 L9.8 6.9 Z" fill="#555"/></svg><span style="left:51.20px;transform:scaleX(0.7661)">svchost.exe</span><span class="R" style="right:616.00px;transform:scaleX(0.9750)">0</span><span class="R" style="right:583.80px;transform:scaleX(0.8694)">3132</span><span style="left:183.30px;transform:scaleX(0.7261)">64-bit</span><svg class="a" style="left:216.4px;top:0" width="13" height="12"><rect x="0.6" y="2" width="9.2" height="8.7" fill="#111"/><rect x="1.3" y="2.7" width="2.3" height="5.2" fill="#b484f8"/><rect x="1.3" y="8.5" width="2.3" height="1.6" fill="#b484f8"/><rect x="4.3" y="2.7" width="2.3" height="2.3" fill="#a0a0a0"/><rect x="4.3" y="5.6" width="2.3" height="2.3" fill="#9a6ae4"/><rect x="4.3" y="8.5" width="2.3" height="1.6" fill="#7e50c0"/><rect x="7.3" y="2.7" width="2.3" height="5.2" fill="#fff"/><rect x="7.3" y="8.5" width="2.3" height="1.6" fill="#b484f8"/><path d="M9.4 0.3 L11.3 2.1 L9.4 3.9 L7.5 2.1 Z" fill="#fff" stroke="#2a2a2a" stroke-width="1.1" stroke-linejoin="round"/></svg><span style="left:229.70px;transform:scaleX(0.7514)">RegQueryKey</span><span style="left:294.20px;transform:scaleX(0.8099)">HKLM</span><span style="left:451.80px;transform:scaleX(0.7678)">SUCCESS</span><span style="left:528.50px;transform:scaleX(0.7730)">Query: HandleTag...</span><span style="left:607.30px;transform:scaleX(0.7995)">5/25/2021 12:42:...</span><span style="left:685.00px;transform:scaleX(0.8066)">C:\Windows\syste...</span></div>
<div class="r" style="top:569.92px"><span style="left:2.95px;transform:scaleX(0.7977)">12:42:...</span><svg class="a" style="left:38px;top:0" width="12" height="12"><rect x="1" y="1" width="11" height="1" fill="#9a9a9a"/><rect x="1" y="2" width="11" height="7" fill="#f6f6f6"/><rect x="2.2" y="4" width="0.8" height="2.2" fill="#c8c8c8"/><rect x="3.9" y="2.2" width="4.1" height="5.8" fill="#0a78dc"/><path d="M8.7 5 L10.9 5 L9.8 6.9 Z" fill="#555"/></svg><span style="left:51.20px;transform:scaleX(0.7661)">svchost.exe</span><span class="R" style="right:616.00px;transform:scaleX(0.9750)">0</span><span class="R" style="right:583.80px;transform:scaleX(0.8694)">3132</span><span style="left:183.30px;transform:scaleX(0.7261)">64-bit</span><svg class="a" style="left:216.4px;top:0" width="13" height="12"><rect x="0.6" y="2" width="9.2" height="8.7" fill="#111"/><rect x="1.3" y="2.7" width="2.3" height="5.2" fill="#b484f8"/><rect x="1.3" y="8.5" width="2.3" height="1.6" fill="#b484f8"/><rect x="4.3" y="2.7" width="2.3" height="2.3" fill="#a0a0a0"/><rect x="4.3" y="5.6" width="2.3" height="2.3" fill="#9a6ae4"/><rect x="4.3" y="8.5" width="2.3" height="1.6" fill="#7e50c0"/><rect x="7.3" y="2.7" width="2.3" height="5.2" fill="#fff"/><rect x="7.3" y="8.5" width="2.3" height="1.6" fill="#b484f8"/><path d="M9.4 0.3 L11.3 2.1 L9.4 3.9 L7.5 2.1 Z" fill="#fff" stroke="#2a2a2a" stroke-width="1.1" stroke-linejoin="round"/></svg><span style="left:229.70px;transform:scaleX(0.7514)">RegOpenKey</span><span style="left:294.20px;transform:scaleX(0.8099)">HKLM\system\Setup</span><span style="left:451.80px;transform:scaleX(0.7678)">SUCCESS</span><span style="left:528.50px;transform:scaleX(0.7730)">Desired Access: R...</span><span style="left:607.30px;transform:scaleX(0.7995)">5/25/2021 12:42:...</span><span style="left:685.00px;transform:scaleX(0.8066)">C:\Windows\syste...</span></div>
</div>
<div class="a" style="left:787px;top:72px;width:12px;height:506px;background:#f0f0f0"></div>
<svg class="a" style="left:787px;top:72px" width="12" height="14"><path d="M3.2 8.2 L5.8 5.6 L8.4 8.2" fill="none" stroke="#505050" stroke-width="1.8"/></svg>
<svg class="a" style="left:787px;top:564px" width="12" height="14"><path d="M3 6.2 L6 9.2 L9 6.2" fill="none" stroke="#505050" stroke-width="1.7"/></svg>
<div class="a" style="left:787px;top:282px;width:11px;height:13px;background:#cdcdcd"></div>
<div class="a" style="left:1px;top:578px;width:798px;height:18px;background:#f0f0f0;border-top:1px solid #e0e0e0"></div>
<div class="a" style="left:212px;top:579px;width:1px;height:17px;background:#d7d7d7"></div>
<div class="a" style="left:547px;top:579px;width:1px;height:17px;background:#d7d7d7"></div>
<div class="t" style="left:2.50px;transform-origin:0 0;top:584.03px;font-size:10px;line-height:10px;transform:scaleX(0.8730);">Showing 125,034 of 366,792 events (34%)</div>
<div class="t" style="left:214.50px;transform-origin:0 0;top:584.03px;font-size:10px;line-height:10px;transform:scaleX(0.9340);">Backed by virtual memory</div>
<svg class="a" style="left:786px;top:584px" width="13" height="12"><rect x="10.2" y="4.3" width="1.3" height="1.3" fill="#a8a8a8"/><rect x="8" y="7" width="1.3" height="1.3" fill="#a8a8a8"/><rect x="10.2" y="7" width="1.3" height="1.3" fill="#a8a8a8"/><rect x="5.4" y="9.4" width="1.3" height="1.3" fill="#a8a8a8"/><rect x="8" y="9.4" width="1.3" height="1.3" fill="#a8a8a8"/><rect x="10.2" y="9.4" width="1.3" height="1.3" fill="#a8a8a8"/></svg></body></html>
